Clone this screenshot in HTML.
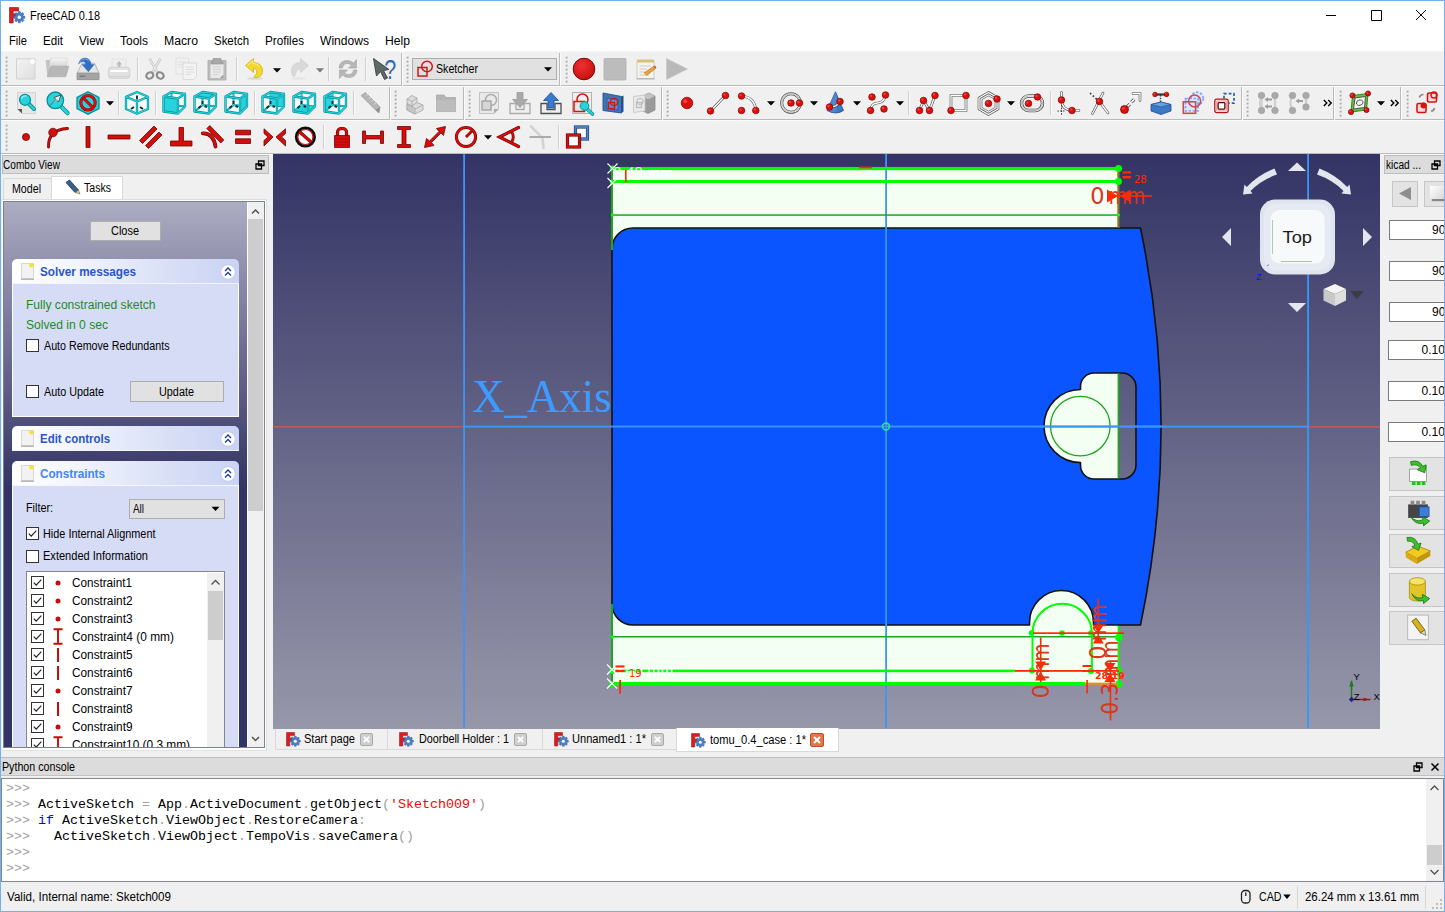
<!DOCTYPE html><html><head><meta charset="utf-8"><title>FreeCAD 0.18</title><style>
html,body{margin:0;padding:0;background:#f0f0f0;}
body{width:1445px;height:912px;overflow:hidden;font-family:"Liberation Sans",sans-serif;font-size:12px;}
#r{position:relative;width:1445px;height:912px;overflow:hidden;background:#f0f0f0;}
.t{position:absolute;white-space:pre;line-height:1;transform-origin:0 50%;display:block;}
.b{position:absolute;box-sizing:border-box;}
svg{position:absolute;overflow:visible;}
</style></head><body><div id="r">
<!-- sec_chrome -->
<div class="b" style="left:0px;top:0px;width:1445px;height:52px;background:#fff;"></div><div class="b" style="left:0px;top:51px;width:1445px;height:1px;background:#f6f6f6;"></div><svg style="left:8px;top:6px" width="18" height="18" viewBox="0 0 18 18"><path d="M1.5 1.5H10.5V5H5.2V7.8H9V11H5.2V17H1.5Z" fill="#e01b1b" stroke="#8a1010" stroke-width=".6"/><g transform="translate(11.3,11.2)"><path d="M-1.21 -3.92L-0.98 -5.62L0.98 -5.62L1.21 -3.92L1.92 -3.62L3.28 -4.66L4.66 -3.28L3.62 -1.92L3.92 -1.21L5.62 -0.98L5.62 0.98L3.92 1.21L3.62 1.92L4.66 3.28L3.28 4.66L1.92 3.62L1.21 3.92L0.98 5.62L-0.98 5.62L-1.21 3.92L-1.92 3.62L-3.28 4.66L-4.66 3.28L-3.62 1.92L-3.92 1.21L-5.62 0.98L-5.62 -0.98L-3.92 -1.21L-3.62 -1.92L-4.66 -3.28L-3.28 -4.66L-1.92 -3.62Z" fill="#4a7fc0" stroke="#2a55a0" stroke-width=".5"/><circle r="1.7" fill="#fff"/></g></svg><span class="t" style="left:30px;top:9.84px;font-size:12px;color:#000;transform:scaleX(0.9127);">FreeCAD 0.18</span><svg style="left:1300px;top:0" width="145" height="30" viewBox="0 0 145 30"><path d="M26 15.5H36M71.5 10.5H81.5V20.5H71.5ZM116 10L126 20M126 10L116 20" fill="none" stroke="#000" stroke-width="1"/></svg><span class="t" style="left:9px;top:34.84px;font-size:12px;color:#000;transform:scaleX(0.9310);">File</span><span class="t" style="left:43px;top:34.84px;font-size:12px;color:#000;transform:scaleX(0.9672);">Edit</span><span class="t" style="left:79px;top:34.84px;font-size:12px;color:#000;transform:scaleX(0.9693);">View</span><span class="t" style="left:120px;top:34.84px;font-size:12px;color:#000;transform:scaleX(0.9996);">Tools</span><span class="t" style="left:164px;top:34.84px;font-size:12px;color:#000;transform:scaleX(1.0198);">Macro</span><span class="t" style="left:214px;top:34.84px;font-size:12px;color:#000;transform:scaleX(0.9540);">Sketch</span><span class="t" style="left:265px;top:34.84px;font-size:12px;color:#000;transform:scaleX(0.9747);">Profiles</span><span class="t" style="left:320px;top:34.84px;font-size:12px;color:#000;transform:scaleX(1.0066);">Windows</span><span class="t" style="left:385px;top:34.84px;font-size:12px;color:#000;transform:scaleX(1.0130);">Help</span><div class="b" style="left:1px;top:85px;width:1443px;height:1px;background:#bababa;"></div><div class="b" style="left:1px;top:86px;width:1443px;height:1px;background:#fbfbfb;"></div><div class="b" style="left:1px;top:119px;width:1443px;height:1px;background:#bababa;"></div><div class="b" style="left:1px;top:120px;width:1443px;height:1px;background:#fbfbfb;"></div><div class="b" style="left:1px;top:153px;width:1443px;height:1px;background:#bababa;"></div><div class="b" style="left:1px;top:154px;width:1443px;height:1px;background:#f8f8f8;"></div>
<!-- sec_icons -->
<svg style="left:4.7px;top:56px" width="3" height="27" viewBox="0 0 3 27"><rect x="0" y="0" width="1.500" height="1.500" fill="#fff"/><rect x=".6" y="0.6" width="1.900" height="1.900" fill="#a6a6a6"/><rect x="0" y="4" width="1.500" height="1.500" fill="#fff"/><rect x=".6" y="4.6" width="1.900" height="1.900" fill="#a6a6a6"/><rect x="0" y="8" width="1.500" height="1.500" fill="#fff"/><rect x=".6" y="8.6" width="1.900" height="1.900" fill="#a6a6a6"/><rect x="0" y="12" width="1.500" height="1.500" fill="#fff"/><rect x=".6" y="12.6" width="1.900" height="1.900" fill="#a6a6a6"/><rect x="0" y="16" width="1.500" height="1.500" fill="#fff"/><rect x=".6" y="16.6" width="1.900" height="1.900" fill="#a6a6a6"/><rect x="0" y="20" width="1.500" height="1.500" fill="#fff"/><rect x=".6" y="20.6" width="1.900" height="1.900" fill="#a6a6a6"/><rect x="0" y="24" width="1.500" height="1.500" fill="#fff"/><rect x=".6" y="24.6" width="1.900" height="1.900" fill="#a6a6a6"/></svg><svg style="left:14.0px;top:57px" width="24" height="24" viewBox="0 0 24 24"><defs><linearGradient id="gn" x1="0" y1="0" x2="1" y2="1"><stop offset="0" stop-color="#f4f4f4"/><stop offset="1" stop-color="#dedede"/></linearGradient></defs><path d="M2.500 1.800H21V22H2.500Z" fill="url(#gn)" stroke="#d2d2d2" stroke-width="1"/><circle cx="18.500" cy="4.500" r="2.500" fill="#fff" opacity=".9"/></svg><svg style="left:45.0px;top:57px" width="24" height="24" viewBox="0 0 24 24"><defs><linearGradient id="gp" x1="0" y1="0" x2="0" y2="1"><stop offset="0" stop-color="#f6f6f6"/><stop offset="1" stop-color="#cfcfcf"/></linearGradient></defs><path d="M.5 3H6V19.700H2.500Z" fill="#c4c4c4"/><path d="M5.500 1.200H22V11H4Z" fill="url(#gp)" stroke="#c9c9c9" stroke-width=".5"/><path d="M6 9.200H24L20.700 19.800H2.200Z" fill="#b7b7b7" stroke="#ababab" stroke-width=".6"/></svg><svg style="left:76.0px;top:57px" width="24" height="24" viewBox="0 0 24 24"><path d="M6.100 6.200H18.600L22.900 16V22.600H1.200V16Z" fill="#e4e4e4" stroke="#a9a9a9" stroke-width=".8"/><path d="M1.200 16H22.900V22.600H1.200Z" fill="#a4a4a4" stroke="#8e8e8e" stroke-width=".7"/><path d="M3.500 19.300H9.500" stroke="#757575" stroke-width="1.300"/><path d="M2.500 7Q4 1 8.700 1Q14.500 1 15 7.500H18.200L12.400 14.800L6 7.500H9.500Q9.500 4.500 7.300 4.500Q4.500 4.500 2.500 7Z" fill="#2f6fc4" stroke="#2a5fa8" stroke-width=".4"/><path d="M3.500 5.500Q5.500 2 8.700 2Q12 2 13 4.500" fill="none" stroke="#7aa6e0" stroke-width=".9"/></svg><svg style="left:107.0px;top:57px" width="24" height="24" viewBox="0 0 24 24"><path d="M5 2H19.200V11H5Z" fill="#efefef" stroke="#dcdcdc" stroke-width=".7"/><path d="M12.100 4L15.200 7.600H13.400V10.200H10.800V7.600H9Z" fill="#bdbdbd"/><rect x="1.400" y="10.200" width="21.400" height="11.200" rx="2.600" fill="#e2e2e2" stroke="#cdcdcd" stroke-width=".8"/><path d="M4 14H20" stroke="#fdfdfd" stroke-width="2.200" stroke-linecap="round"/><path d="M2 19.500H22.300" stroke="#d2d2d2" stroke-width="1.200"/></svg><div class="b" style="left:137px;top:57px;width:1px;height:24px;background:#d0d0d0;"></div><div class="b" style="left:138px;top:57px;width:1px;height:24px;background:#fafafa;"></div><svg style="left:143.0px;top:57px" width="24" height="24" viewBox="0 0 24 24"><path d="M6.500 1.500L14.500 15.500M17.500 1.500L9.500 15.500" stroke="#c9c9c9" stroke-width="2.600"/><path d="M6.500 1.500L14.500 15.500M17.500 1.500L9.500 15.500" stroke="#e9e9e9" stroke-width="1.100"/><ellipse cx="6.800" cy="18.500" rx="3.600" ry="3" transform="rotate(-30 6.800 18.500)" fill="none" stroke="#8c8c8c" stroke-width="2.200"/><ellipse cx="17.200" cy="18.500" rx="3.600" ry="3" transform="rotate(30 17.200 18.500)" fill="none" stroke="#8c8c8c" stroke-width="2.200"/></svg><svg style="left:174.0px;top:57px" width="24" height="24" viewBox="0 0 24 24"><path d="M2 1H14.500V17H2Z" fill="#f1f1f1" stroke="#dcdcdc" stroke-width=".8"/><path d="M4 5H12M4 7.500H12M4 10H12" stroke="#e0e0e0" stroke-width="1"/><path d="M9 6H22.500V19.500L19.500 22.500H9Z" fill="#f3f3f3" stroke="#d4d4d4" stroke-width=".8"/><path d="M11.500 10H20M11.500 12.500H20M11.500 15H20M11.500 17.500H17" stroke="#dcdcdc" stroke-width="1.100"/></svg><svg style="left:205.0px;top:57px" width="24" height="24" viewBox="0 0 24 24"><path d="M3 3.500H21V23H3Z" fill="#bdbdbd" stroke="#a7a7a7" stroke-width=".8"/><path d="M5.500 6.500H18.500V21H5.500Z" fill="#e9e9e9"/><path d="M8 1.500H16V5H18V7H6V5H8Z" fill="#a9a9a9" stroke="#8f8f8f" stroke-width=".6"/><path d="M8 10H16M8 12.500H16M8 15H16M8 17.500H13" stroke="#d2d2d2" stroke-width="1.100"/><path d="M18.500 17.500V21H15Z" fill="#9c9c9c"/></svg><div class="b" style="left:236px;top:57px;width:1px;height:24px;background:#d0d0d0;"></div><div class="b" style="left:237px;top:57px;width:1px;height:24px;background:#fafafa;"></div><svg style="left:242.5px;top:57px" width="24" height="24" viewBox="0 0 24 24"><ellipse cx="12" cy="21.500" rx="8" ry="1.300" fill="#d9d9d9"/><path d="M2.500 8.500L10.500 1.500V5.500Q19.500 6 19.500 14Q19.500 19 14.500 20.500Q10.500 21 11 19.500Q15 17 13.500 13.500Q12.500 11.500 10.500 11.500V15.500Z" fill="#f3d72d" stroke="#d2b214" stroke-width=".8"/><path d="M4.500 8.500L10 3.500V6.500Q14 6.500 16.500 9" fill="none" stroke="#fbef9a" stroke-width="1"/></svg><svg style="left:272.5px;top:67.5px" width="8" height="5" viewBox="0 0 8 5"><path d="M0 .3H8L4 4.600Z" fill="#000"/></svg><svg style="left:286.5px;top:57px" width="24" height="24" viewBox="0 0 24 24"><ellipse cx="12" cy="21.500" rx="8" ry="1.200" fill="#e4e4e4"/><path d="M21.500 8.500L13.500 1.500V5.500Q4.500 6 4.500 14Q4.500 18 7 20Q8.500 18 9 15.500Q10 11.500 13.500 11.500V15.500Z" fill="#d9d9d9" stroke="#cdcdcd" stroke-width=".7"/></svg><svg style="left:315.5px;top:67.5px" width="8" height="5" viewBox="0 0 8 5"><path d="M0 .3H8L4 4.600Z" fill="#7a7a7a"/></svg><div class="b" style="left:328px;top:57px;width:1px;height:24px;background:#d0d0d0;"></div><div class="b" style="left:329px;top:57px;width:1px;height:24px;background:#fafafa;"></div><svg style="left:335.5px;top:57px" width="24" height="24" viewBox="0 0 24 24"><path d="M3 11Q3.500 3.500 11.500 3.500Q15 3.500 17.500 6L20.500 2.500V11H12.500L15.500 8Q13.500 6.500 11.500 6.500Q7 6.500 6.500 11Z" fill="#b7b7b7" stroke="#a2a2a2" stroke-width=".6"/><path d="M21 13Q20.500 20.500 12.500 20.500Q9 20.500 6.500 18L3.500 21.500V13H11.500L8.500 16Q10.500 17.500 12.500 17.500Q17 17.500 17.500 13Z" fill="#b7b7b7" stroke="#a2a2a2" stroke-width=".6"/></svg><div class="b" style="left:365px;top:57px;width:1px;height:24px;background:#d0d0d0;"></div><div class="b" style="left:366px;top:57px;width:1px;height:24px;background:#fafafa;"></div><svg style="left:372.0px;top:57px" width="24" height="24" viewBox="0 0 24 24"><path d="M1.500 1.500L4.500 19L8.500 14.500L12.500 22.500L15.500 21L11.500 13.500L17 12.500Z" fill="#5d6a63" stroke="#39423e" stroke-width=".9"/><text x="12.300" y="22.300" font-family="Liberation Sans,sans-serif" font-size="27" fill="#2f6ab5" textLength="12" lengthAdjust="spacingAndGlyphs">?</text></svg><div class="b" style="left:401px;top:53px;width:1px;height:33px;background:#bababa;"></div><div class="b" style="left:402px;top:53px;width:1px;height:33px;background:#fbfbfb;"></div><svg style="left:405.7px;top:56px" width="3" height="27" viewBox="0 0 3 27"><rect x="0" y="0" width="1.500" height="1.500" fill="#fff"/><rect x=".6" y="0.6" width="1.900" height="1.900" fill="#a6a6a6"/><rect x="0" y="4" width="1.500" height="1.500" fill="#fff"/><rect x=".6" y="4.6" width="1.900" height="1.900" fill="#a6a6a6"/><rect x="0" y="8" width="1.500" height="1.500" fill="#fff"/><rect x=".6" y="8.6" width="1.900" height="1.900" fill="#a6a6a6"/><rect x="0" y="12" width="1.500" height="1.500" fill="#fff"/><rect x=".6" y="12.6" width="1.900" height="1.900" fill="#a6a6a6"/><rect x="0" y="16" width="1.500" height="1.500" fill="#fff"/><rect x=".6" y="16.6" width="1.900" height="1.900" fill="#a6a6a6"/><rect x="0" y="20" width="1.500" height="1.500" fill="#fff"/><rect x=".6" y="20.6" width="1.900" height="1.900" fill="#a6a6a6"/><rect x="0" y="24" width="1.500" height="1.500" fill="#fff"/><rect x=".6" y="24.6" width="1.900" height="1.900" fill="#a6a6a6"/></svg><div class="b" style="left:412px;top:58px;width:145px;height:22px;background:#e1e1e1;border:1px solid #adadad;"></div><svg style="left:416.0px;top:60px" width="18" height="18" viewBox="0 0 18 18"><circle cx="11" cy="6.500" r="5.300" fill="none" stroke="#d4141c" stroke-width="1.500"/><rect x="2" y="7.500" width="9" height="8.500" fill="none" stroke="#d4141c" stroke-width="1.500"/></svg><span class="t" style="left:435.5px;top:63.34px;font-size:12px;color:#000;transform:scaleX(0.8869);">Sketcher</span><svg style="left:543.5px;top:67.0px" width="8" height="5" viewBox="0 0 8 5"><path d="M0 .3H8L4 4.600Z" fill="#000"/></svg><div class="b" style="left:559px;top:53px;width:1px;height:33px;background:#bababa;"></div><div class="b" style="left:560px;top:53px;width:1px;height:33px;background:#fbfbfb;"></div><svg style="left:564.7px;top:56px" width="3" height="27" viewBox="0 0 3 27"><rect x="0" y="0" width="1.500" height="1.500" fill="#fff"/><rect x=".6" y="0.6" width="1.900" height="1.900" fill="#a6a6a6"/><rect x="0" y="4" width="1.500" height="1.500" fill="#fff"/><rect x=".6" y="4.6" width="1.900" height="1.900" fill="#a6a6a6"/><rect x="0" y="8" width="1.500" height="1.500" fill="#fff"/><rect x=".6" y="8.6" width="1.900" height="1.900" fill="#a6a6a6"/><rect x="0" y="12" width="1.500" height="1.500" fill="#fff"/><rect x=".6" y="12.6" width="1.900" height="1.900" fill="#a6a6a6"/><rect x="0" y="16" width="1.500" height="1.500" fill="#fff"/><rect x=".6" y="16.6" width="1.900" height="1.900" fill="#a6a6a6"/><rect x="0" y="20" width="1.500" height="1.500" fill="#fff"/><rect x=".6" y="20.6" width="1.900" height="1.900" fill="#a6a6a6"/><rect x="0" y="24" width="1.500" height="1.500" fill="#fff"/><rect x=".6" y="24.6" width="1.900" height="1.900" fill="#a6a6a6"/></svg><svg style="left:572.0px;top:57px" width="24" height="24" viewBox="0 0 24 24"><defs><radialGradient id="gr" cx=".4" cy=".35" r=".7"><stop offset="0" stop-color="#f03030"/><stop offset="1" stop-color="#c40f0f"/></radialGradient></defs><circle cx="12" cy="12" r="10.800" fill="url(#gr)" stroke="#6e0b0b" stroke-width="1"/></svg><svg style="left:603.0px;top:57px" width="24" height="24" viewBox="0 0 24 24"><rect x="1" y="1.500" width="22" height="21.500" rx="1" fill="#bcbcbc" stroke="#b0b0b0" stroke-width=".8"/></svg><svg style="left:634.0px;top:57px" width="24" height="24" viewBox="0 0 24 24"><path d="M3 3.500H20V21.500H3Z" fill="#f4f4f0" stroke="#c2c2be" stroke-width=".8"/><path d="M3 2.500H20V5.500H3Z" fill="#d9c07a"/><path d="M2.500 21H20.500V22.500H2.500Z" fill="#b9b9b9"/><path d="M5.500 9H17M5.500 12H13M5.500 15H11M5.500 18H15" stroke="#c9c9c9" stroke-width="1"/><path d="M10 16L19.500 9.500L21.500 11.500L12.500 18.500Z" fill="#e8a33a" stroke="#a86a14" stroke-width=".6"/><path d="M10 16L12.500 18.500L8.500 19Z" fill="#f2dcb0"/><path d="M19.500 9.500L21 8.500L22.500 10.500L21.500 11.500Z" fill="#d9534f"/></svg><svg style="left:665.0px;top:57px" width="24" height="24" viewBox="0 0 24 24"><path d="M1.500 1.500V22.500L22.500 12Z" fill="#b9b9b9" stroke="#c9c9c9" stroke-width=".8"/></svg><svg style="left:4.7px;top:90px" width="3" height="27" viewBox="0 0 3 27"><rect x="0" y="0" width="1.500" height="1.500" fill="#fff"/><rect x=".6" y="0.6" width="1.900" height="1.900" fill="#a6a6a6"/><rect x="0" y="4" width="1.500" height="1.500" fill="#fff"/><rect x=".6" y="4.6" width="1.900" height="1.900" fill="#a6a6a6"/><rect x="0" y="8" width="1.500" height="1.500" fill="#fff"/><rect x=".6" y="8.6" width="1.900" height="1.900" fill="#a6a6a6"/><rect x="0" y="12" width="1.500" height="1.500" fill="#fff"/><rect x=".6" y="12.6" width="1.900" height="1.900" fill="#a6a6a6"/><rect x="0" y="16" width="1.500" height="1.500" fill="#fff"/><rect x=".6" y="16.6" width="1.900" height="1.900" fill="#a6a6a6"/><rect x="0" y="20" width="1.500" height="1.500" fill="#fff"/><rect x=".6" y="20.6" width="1.900" height="1.900" fill="#a6a6a6"/><rect x="0" y="24" width="1.500" height="1.500" fill="#fff"/><rect x=".6" y="24.6" width="1.900" height="1.900" fill="#a6a6a6"/></svg><svg style="left:13.5px;top:91px" width="24" height="24" viewBox="0 0 24 24"><path d="M3.500 1.500H21.500V22.500H8L3.500 18Z" fill="#e6e8e6" stroke="#c9c9c9" stroke-width=".7"/><path d="M3.500 18H8V22.500Z" fill="#555"/><path d="M13.500 11.500L20 18" stroke="#0b8e98" stroke-width="4" stroke-linecap="round"/><path d="M13.500 11.500L20 18" stroke="#27d4dc" stroke-width="2.200" stroke-linecap="round"/><circle cx="11" cy="8.800" r="5.500" fill="#27d4dc" stroke="#0b8e98" stroke-width="1.200"/><path d="M7.500 7.500Q9 4.500 12.500 5" fill="none" stroke="#9df1f5" stroke-width="1.300"/></svg><svg style="left:44.5px;top:91px" width="24" height="24" viewBox="0 0 24 24"><path d="M15.500 15L22.500 22" stroke="#0b8e98" stroke-width="4.400" stroke-linecap="round"/><path d="M15.500 15L22.500 22" stroke="#27d4dc" stroke-width="2.600" stroke-linecap="round"/><circle cx="10.300" cy="9.300" r="8.300" fill="#27d4dc" stroke="#0b8e98" stroke-width="1.300"/><path d="M5 14.500L11 8.500L9 6.500L16 4L13.500 11L11.800 9.300" fill="#f0f0f0" stroke="#444" stroke-width=".9" stroke-linejoin="round"/></svg><svg style="left:75.5px;top:91px" width="24" height="24" viewBox="0 0 24 24"><path d="M12 .800L23 6.500V17.500L12 23.200L1 17.500V6.500Z" fill="#27d4dc" stroke="#0b8e98" stroke-width="1.300"/><circle cx="12" cy="11.800" r="7.200" fill="none" stroke="#7a0606" stroke-width="3"/><circle cx="12" cy="11.800" r="7.200" fill="none" stroke="#dc0f0f" stroke-width="2"/><path d="M7 6.800L17 16.800" stroke="#7a0606" stroke-width="2.800"/><path d="M7 6.800L17 16.800" stroke="#dc0f0f" stroke-width="1.800"/></svg><svg style="left:105.5px;top:100.5px" width="8" height="5" viewBox="0 0 8 5"><path d="M0 .3H8L4 4.600Z" fill="#000"/></svg><div class="b" style="left:118px;top:91px;width:1px;height:24px;background:#d0d0d0;"></div><div class="b" style="left:119px;top:91px;width:1px;height:24px;background:#fafafa;"></div><svg style="left:125.0px;top:91px" width="24" height="24" viewBox="0 0 24 24"><path d="M12 1L23 5.800V18L12 22.800L1 18V5.800Z" fill="#f3fbfb"/><path d="M12 8.500V4.500" stroke="#0c2f33" stroke-width="1.900"/><path d="M9 16L6 18M15 16L18 18" stroke="#0c2f33" stroke-width="1.900"/><path d="M12 1V10.500M1 18L12 13.500L23 18" fill="none" stroke="#0b8e98" stroke-width="1.600" opacity=".0"/><path d="M12 1L23 5.800V18L12 22.800L1 18V5.800ZM1 5.800L12 10.500L23 5.800M12 10.500V22.800" fill="none" stroke="#0b8e98" stroke-width="2.300" stroke-linejoin="round"/><path d="M12 1L23 5.800V18L12 22.800L1 18V5.800ZM1 5.800L12 10.500L23 5.800M12 10.500V22.800" fill="none" stroke="#27d4dc" stroke-width="1.100" stroke-linejoin="round"/></svg><div class="b" style="left:155px;top:91px;width:1px;height:24px;background:#d0d0d0;"></div><div class="b" style="left:156px;top:91px;width:1px;height:24px;background:#fafafa;"></div><svg style="left:161.5px;top:91px" width="24" height="24" viewBox="0 0 24 24"><path d="M1.5 5.5L9.5 1L23 2.8L23 15.5L16 22.5L1.5 20.5Z" fill="#f3fbfb"/><path d="M9.5 14L9.5 1M9.5 14L23 15.5M9.5 14L1.5 20.5" fill="none" stroke="#0b8e98" stroke-width="1.900"/><path d="M9.5 14L9.5 1M9.5 14L23 15.5M9.5 14L1.5 20.5" fill="none" stroke="#27d4dc" stroke-width=".8"/><path d="M1.5 5.5L16 7.5L16 22.5L1.5 20.5Z" fill="#27d4dc"/><path d="M1.5 5.5L16 7.5L16 22.5L1.5 20.5ZM1.5 5.5L9.5 1L23 2.8L16 7.5ZM16 7.5L23 2.8L23 15.5L16 22.5Z" fill="none" stroke="#0b8e98" stroke-width="2.300" stroke-linejoin="round"/><path d="M1.5 5.5L16 7.5L16 22.5L1.5 20.5ZM1.5 5.5L9.5 1L23 2.8L16 7.5ZM16 7.5L23 2.8L23 15.5L16 22.5Z" fill="none" stroke="#27d4dc" stroke-width="1.100" stroke-linejoin="round"/></svg><svg style="left:192.5px;top:91px" width="24" height="24" viewBox="0 0 24 24"><path d="M1.5 5.5L9.5 1L23 2.8L23 15.5L16 22.5L1.5 20.5Z" fill="#f3fbfb"/><path d="M9.5 14L9.5 1M9.5 14L23 15.5M9.5 14L1.5 20.5" fill="none" stroke="#0b8e98" stroke-width="1.900"/><path d="M9.5 14L9.5 1M9.5 14L23 15.5M9.5 14L1.5 20.5" fill="none" stroke="#27d4dc" stroke-width=".8"/><path d="M9.500 13.500V10" stroke="#0c2f33" stroke-width="1.800"/><path d="M8 15L5.500 17M11.500 15L14 16" stroke="#0c2f33" stroke-width="1.900"/><path d="M9.500 13.500L8 15M9.500 13.500L11.500 15" stroke="#35dbe4" stroke-width=".9"/><path d="M1.5 5.5L9.5 1L23 2.8L16 7.5Z" fill="#27d4dc"/><path d="M1.5 5.5L16 7.5L16 22.5L1.5 20.5ZM1.5 5.5L9.5 1L23 2.8L16 7.5ZM16 7.5L23 2.8L23 15.5L16 22.5Z" fill="none" stroke="#0b8e98" stroke-width="2.300" stroke-linejoin="round"/><path d="M1.5 5.5L16 7.5L16 22.5L1.5 20.5ZM1.5 5.5L9.5 1L23 2.8L16 7.5ZM16 7.5L23 2.8L23 15.5L16 22.5Z" fill="none" stroke="#27d4dc" stroke-width="1.100" stroke-linejoin="round"/></svg><svg style="left:223.5px;top:91px" width="24" height="24" viewBox="0 0 24 24"><path d="M1.5 5.5L9.5 1L23 2.8L23 15.5L16 22.5L1.5 20.5Z" fill="#f3fbfb"/><path d="M9.5 14L9.5 1M9.5 14L23 15.5M9.5 14L1.5 20.5" fill="none" stroke="#0b8e98" stroke-width="1.900"/><path d="M9.5 14L9.5 1M9.5 14L23 15.5M9.5 14L1.5 20.5" fill="none" stroke="#27d4dc" stroke-width=".8"/><path d="M9.500 13.500V10" stroke="#0c2f33" stroke-width="1.800"/><path d="M8 15L5.500 17M11.500 15L14 16" stroke="#0c2f33" stroke-width="1.900"/><path d="M9.500 13.500L8 15M9.500 13.500L11.500 15" stroke="#35dbe4" stroke-width=".9"/><path d="M16 7.5L23 2.8L23 15.5L16 22.5Z" fill="#27d4dc"/><path d="M1.5 5.5L16 7.5L16 22.5L1.5 20.5ZM1.5 5.5L9.5 1L23 2.8L16 7.5ZM16 7.5L23 2.8L23 15.5L16 22.5Z" fill="none" stroke="#0b8e98" stroke-width="2.300" stroke-linejoin="round"/><path d="M1.5 5.5L16 7.5L16 22.5L1.5 20.5ZM1.5 5.5L9.5 1L23 2.8L16 7.5ZM16 7.5L23 2.8L23 15.5L16 22.5Z" fill="none" stroke="#27d4dc" stroke-width="1.100" stroke-linejoin="round"/></svg><div class="b" style="left:254px;top:91px;width:1px;height:24px;background:#d0d0d0;"></div><div class="b" style="left:255px;top:91px;width:1px;height:24px;background:#fafafa;"></div><svg style="left:260.5px;top:91px" width="24" height="24" viewBox="0 0 24 24"><path d="M1.5 5.5L9.5 1L23 2.8L23 15.5L16 22.5L1.5 20.5Z" fill="#f3fbfb"/><path d="M9.5 14L9.5 1M9.5 14L23 15.5M9.5 14L1.5 20.5" fill="none" stroke="#0b8e98" stroke-width="1.900"/><path d="M9.5 14L9.5 1M9.5 14L23 15.5M9.5 14L1.5 20.5" fill="none" stroke="#27d4dc" stroke-width=".8"/><path d="M9.5 1L23 2.8L23 15.5L9.5 14Z" fill="#27d4dc"/><path d="M9.500 13.500V10" stroke="#0c2f33" stroke-width="1.800"/><path d="M8 15L5.500 17M11.500 15L14 16" stroke="#0c2f33" stroke-width="1.900"/><path d="M9.500 13.500L8 15M9.500 13.500L11.500 15" stroke="#35dbe4" stroke-width=".9"/><path d="M1.5 5.5L16 7.5L16 22.5L1.5 20.5ZM1.5 5.5L9.5 1L23 2.8L16 7.5ZM16 7.5L23 2.8L23 15.5L16 22.5Z" fill="none" stroke="#0b8e98" stroke-width="2.300" stroke-linejoin="round"/><path d="M1.5 5.5L16 7.5L16 22.5L1.5 20.5ZM1.5 5.5L9.5 1L23 2.8L16 7.5ZM16 7.5L23 2.8L23 15.5L16 22.5Z" fill="none" stroke="#27d4dc" stroke-width="1.100" stroke-linejoin="round"/></svg><svg style="left:291.5px;top:91px" width="24" height="24" viewBox="0 0 24 24"><path d="M1.5 5.5L9.5 1L23 2.8L23 15.5L16 22.5L1.5 20.5Z" fill="#f3fbfb"/><path d="M9.5 14L9.5 1M9.5 14L23 15.5M9.5 14L1.5 20.5" fill="none" stroke="#0b8e98" stroke-width="1.900"/><path d="M9.5 14L9.5 1M9.5 14L23 15.5M9.5 14L1.5 20.5" fill="none" stroke="#27d4dc" stroke-width=".8"/><path d="M1.5 20.5L9.5 14L23 15.5L16 22.5Z" fill="#27d4dc"/><path d="M9.500 13.500V10" stroke="#0c2f33" stroke-width="1.800"/><path d="M8 15L5.500 17M11.500 15L14 16" stroke="#0c2f33" stroke-width="1.900"/><path d="M9.500 13.500L8 15M9.500 13.500L11.500 15" stroke="#35dbe4" stroke-width=".9"/><path d="M1.5 5.5L16 7.5L16 22.5L1.5 20.5ZM1.5 5.5L9.5 1L23 2.8L16 7.5ZM16 7.5L23 2.8L23 15.5L16 22.5Z" fill="none" stroke="#0b8e98" stroke-width="2.300" stroke-linejoin="round"/><path d="M1.5 5.5L16 7.5L16 22.5L1.5 20.5ZM1.5 5.5L9.5 1L23 2.8L16 7.5ZM16 7.5L23 2.8L23 15.5L16 22.5Z" fill="none" stroke="#27d4dc" stroke-width="1.100" stroke-linejoin="round"/></svg><svg style="left:322.5px;top:91px" width="24" height="24" viewBox="0 0 24 24"><path d="M1.5 5.5L9.5 1L23 2.8L23 15.5L16 22.5L1.5 20.5Z" fill="#f3fbfb"/><path d="M9.5 14L9.5 1M9.5 14L23 15.5M9.5 14L1.5 20.5" fill="none" stroke="#0b8e98" stroke-width="1.900"/><path d="M9.5 14L9.5 1M9.5 14L23 15.5M9.5 14L1.5 20.5" fill="none" stroke="#27d4dc" stroke-width=".8"/><path d="M1.5 5.5L9.5 1L9.5 14L1.5 20.5Z" fill="#27d4dc"/><path d="M9.500 13.500V10" stroke="#0c2f33" stroke-width="1.800"/><path d="M8 15L5.500 17M11.500 15L14 16" stroke="#0c2f33" stroke-width="1.900"/><path d="M9.500 13.500L8 15M9.500 13.500L11.500 15" stroke="#35dbe4" stroke-width=".9"/><path d="M1.5 5.5L16 7.5L16 22.5L1.5 20.5ZM1.5 5.5L9.5 1L23 2.8L16 7.5ZM16 7.5L23 2.8L23 15.5L16 22.5Z" fill="none" stroke="#0b8e98" stroke-width="2.300" stroke-linejoin="round"/><path d="M1.5 5.5L16 7.5L16 22.5L1.5 20.5ZM1.5 5.5L9.5 1L23 2.8L16 7.5ZM16 7.5L23 2.8L23 15.5L16 22.5Z" fill="none" stroke="#27d4dc" stroke-width="1.100" stroke-linejoin="round"/></svg><div class="b" style="left:353px;top:91px;width:1px;height:24px;background:#d0d0d0;"></div><div class="b" style="left:354px;top:91px;width:1px;height:24px;background:#fafafa;"></div><svg style="left:359.0px;top:91px" width="24" height="24" viewBox="0 0 24 24"><path d="M2 4.500L6.500 1.500L21 16L20 22L16.500 19Z" fill="#b5b5b5" stroke="#a0a0a0" stroke-width=".7"/><path d="M16.500 19L21 16L20 22Z" fill="#8e8e8e"/><path d="M7.500 4.500L9.500 3M10 7.500L12.500 5.500M12.500 10.500L14.500 9M15 13.500L17.500 11.500" stroke="#e0e0e0" stroke-width="1"/></svg><div class="b" style="left:389px;top:87px;width:1px;height:33px;background:#bababa;"></div><div class="b" style="left:390px;top:87px;width:1px;height:33px;background:#fbfbfb;"></div><svg style="left:393.7px;top:90px" width="3" height="27" viewBox="0 0 3 27"><rect x="0" y="0" width="1.500" height="1.500" fill="#fff"/><rect x=".6" y="0.6" width="1.900" height="1.900" fill="#a6a6a6"/><rect x="0" y="4" width="1.500" height="1.500" fill="#fff"/><rect x=".6" y="4.6" width="1.900" height="1.900" fill="#a6a6a6"/><rect x="0" y="8" width="1.500" height="1.500" fill="#fff"/><rect x=".6" y="8.6" width="1.900" height="1.900" fill="#a6a6a6"/><rect x="0" y="12" width="1.500" height="1.500" fill="#fff"/><rect x=".6" y="12.6" width="1.900" height="1.900" fill="#a6a6a6"/><rect x="0" y="16" width="1.500" height="1.500" fill="#fff"/><rect x=".6" y="16.6" width="1.900" height="1.900" fill="#a6a6a6"/><rect x="0" y="20" width="1.500" height="1.500" fill="#fff"/><rect x=".6" y="20.6" width="1.900" height="1.900" fill="#a6a6a6"/><rect x="0" y="24" width="1.500" height="1.500" fill="#fff"/><rect x=".6" y="24.6" width="1.900" height="1.900" fill="#a6a6a6"/></svg><svg style="left:403.0px;top:91px" width="24" height="24" viewBox="0 0 24 24"><path d="M4 8L9 4.500L14 7V11.500L20 14V19L12 23L4 19Z" fill="#dcdcdc" stroke="#a6a6a6" stroke-width=".8"/><path d="M4 8L9 10.500L14 7M9 10.500V15L4 12.500M9 15L14 11.500M9 15L12 23M12 18L20 14" fill="none" stroke="#a6a6a6" stroke-width=".8"/><path d="M4 13L12 17.500V23L4 19Z" fill="#c6c6c6" stroke="#a6a6a6" stroke-width=".7"/></svg><svg style="left:434.0px;top:91px" width="24" height="24" viewBox="0 0 24 24"><path d="M2.500 4H10L12 6.500H21.500V20.500H2.500Z" fill="#b4b4b4" stroke="#a4a4a4" stroke-width=".7"/><path d="M2.500 9H21.500V20.500H2.500Z" fill="#bdbdbd"/></svg><div class="b" style="left:463px;top:87px;width:1px;height:33px;background:#bababa;"></div><div class="b" style="left:464px;top:87px;width:1px;height:33px;background:#fbfbfb;"></div><svg style="left:467.7px;top:90px" width="3" height="27" viewBox="0 0 3 27"><rect x="0" y="0" width="1.500" height="1.500" fill="#fff"/><rect x=".6" y="0.6" width="1.900" height="1.900" fill="#a6a6a6"/><rect x="0" y="4" width="1.500" height="1.500" fill="#fff"/><rect x=".6" y="4.6" width="1.900" height="1.900" fill="#a6a6a6"/><rect x="0" y="8" width="1.500" height="1.500" fill="#fff"/><rect x=".6" y="8.6" width="1.900" height="1.900" fill="#a6a6a6"/><rect x="0" y="12" width="1.500" height="1.500" fill="#fff"/><rect x=".6" y="12.6" width="1.900" height="1.900" fill="#a6a6a6"/><rect x="0" y="16" width="1.500" height="1.500" fill="#fff"/><rect x=".6" y="16.6" width="1.900" height="1.900" fill="#a6a6a6"/><rect x="0" y="20" width="1.500" height="1.500" fill="#fff"/><rect x=".6" y="20.6" width="1.900" height="1.900" fill="#a6a6a6"/><rect x="0" y="24" width="1.500" height="1.500" fill="#fff"/><rect x=".6" y="24.6" width="1.900" height="1.900" fill="#a6a6a6"/></svg><svg style="left:477.0px;top:91px" width="24" height="24" viewBox="0 0 24 24"><path d="M2.500 1.500H21.500V18L17 22.500H2.500Z" fill="#e9e9e9" stroke="#bdbdbd" stroke-width=".9"/><path d="M17 22.500V18H21.500Z" fill="#a9a9a9"/><circle cx="14" cy="9" r="5.500" fill="none" stroke="#a9a9a9" stroke-width="1.400"/><rect x="5" y="10" width="9" height="9" fill="#d6d6d6" stroke="#a4a4a4" stroke-width="1.400"/></svg><svg style="left:508.0px;top:91px" width="24" height="24" viewBox="0 0 24 24"><path d="M2 12.500H8V18.500H16V12.500H22V22.500H2Z" fill="#f0f0f0" stroke="#a9a9a9" stroke-width="1.300"/><path d="M9 1.500H15V8.500H19.500L12 16.500L4.500 8.500H9Z" fill="#aaaaaa" stroke="#979797" stroke-width=".7"/></svg><svg style="left:539.0px;top:91px" width="24" height="24" viewBox="0 0 24 24"><path d="M2 12.500H8V18.500H16V12.500H22V22.500H2Z" fill="#eef0f0" stroke="#4b4f4f" stroke-width="1.300"/><path d="M9 17V9.500H4.500L12 1.500L19.500 9.500H15V17Z" fill="#3a7bd0" stroke="#1c4e94" stroke-width=".8"/></svg><svg style="left:570.0px;top:91px" width="24" height="24" viewBox="0 0 24 24"><path d="M2.500 1.500H21.500V22.500H2.500Z" fill="#f0f0ee" stroke="#a8a8a8" stroke-width=".9"/><circle cx="12.500" cy="8.500" r="5.500" fill="none" stroke="#dc0f0f" stroke-width="1.500"/><rect x="4" y="10.500" width="10.500" height="10" fill="#e6e6e6" stroke="#dc0f0f" stroke-width="1.500"/><path d="M16 17L22.500 23" stroke="#0b8e98" stroke-width="3.600" stroke-linecap="round"/><path d="M16 17L22.500 23" stroke="#27d4dc" stroke-width="2" stroke-linecap="round"/><circle cx="14.500" cy="15" r="4.300" fill="#27d4dc" stroke="#0b8e98" stroke-width="1"/></svg><svg style="left:601.0px;top:91px" width="24" height="24" viewBox="0 0 24 24"><path d="M2 2L20.500 5.500V22L2 19.500Z" fill="#3f74b8" stroke="#1f4f8e" stroke-width=".9"/><path d="M20.500 5.500L22.500 4.500V20.500L20.500 22Z" fill="#274f86"/><path d="M6 7L17 9V19L6 17.500Z" fill="#5b8fd0" stroke="#26508c" stroke-width=".7"/><circle cx="13" cy="11" r="3.600" fill="none" stroke="#dc0f0f" stroke-width="1.300"/><rect x="7.500" y="11.500" width="6" height="6" fill="none" stroke="#dc0f0f" stroke-width="1.300"/></svg><svg style="left:632.0px;top:91px" width="24" height="24" viewBox="0 0 24 24"><path d="M10 5.500L17 2L23 5V19L16 22.500L10 19.500Z" fill="#9b9b9b" stroke="#858585" stroke-width=".7"/><path d="M10 5.500L17 2L23 5L16 8.500Z" fill="#c4c4c4"/><path d="M1.500 5.500L13 4V20L1.500 21.500Z" fill="#e9e9e9" stroke="#c3c3c3" stroke-width=".8"/><circle cx="8" cy="10.500" r="3" fill="none" stroke="#bdbdbd" stroke-width="1.200"/><rect x="4.500" y="11.500" width="5" height="5" fill="none" stroke="#bdbdbd" stroke-width="1.200"/></svg><div class="b" style="left:661px;top:87px;width:1px;height:33px;background:#bababa;"></div><div class="b" style="left:662px;top:87px;width:1px;height:33px;background:#fbfbfb;"></div><svg style="left:665.7px;top:90px" width="3" height="27" viewBox="0 0 3 27"><rect x="0" y="0" width="1.500" height="1.500" fill="#fff"/><rect x=".6" y="0.6" width="1.900" height="1.900" fill="#a6a6a6"/><rect x="0" y="4" width="1.500" height="1.500" fill="#fff"/><rect x=".6" y="4.6" width="1.900" height="1.900" fill="#a6a6a6"/><rect x="0" y="8" width="1.500" height="1.500" fill="#fff"/><rect x=".6" y="8.6" width="1.900" height="1.900" fill="#a6a6a6"/><rect x="0" y="12" width="1.500" height="1.500" fill="#fff"/><rect x=".6" y="12.6" width="1.900" height="1.900" fill="#a6a6a6"/><rect x="0" y="16" width="1.500" height="1.500" fill="#fff"/><rect x=".6" y="16.6" width="1.900" height="1.900" fill="#a6a6a6"/><rect x="0" y="20" width="1.500" height="1.500" fill="#fff"/><rect x=".6" y="20.6" width="1.900" height="1.900" fill="#a6a6a6"/><rect x="0" y="24" width="1.500" height="1.500" fill="#fff"/><rect x=".6" y="24.6" width="1.900" height="1.900" fill="#a6a6a6"/></svg><svg style="left:675.0px;top:91px" width="24" height="24" viewBox="0 0 24 24"><circle cx="12" cy="12" r="5.8" fill="#dc0f0f" stroke="#7a0606" stroke-width=".7"/><circle cx="10.26" cy="10.26" r="2.03" fill="#ff5a4a" opacity=".7"/></svg><svg style="left:706.0px;top:91px" width="24" height="24" viewBox="0 0 24 24"><path d="M4.500 20L19.500 4.500" fill="none" stroke="#555" stroke-width="2.600" stroke-linecap="round"/><path d="M4.500 20L19.500 4.500" fill="none" stroke="#fff" stroke-width="1.300" stroke-linecap="round"/><circle cx="4.5" cy="20" r="3.3" fill="#dc0f0f" stroke="#7a0606" stroke-width=".7"/><circle cx="3.5100000000000002" cy="19.01" r="1.1549999999999998" fill="#ff5a4a" opacity=".7"/><circle cx="19.5" cy="4.5" r="3.3" fill="#dc0f0f" stroke="#7a0606" stroke-width=".7"/><circle cx="18.51" cy="3.5100000000000002" r="1.1549999999999998" fill="#ff5a4a" opacity=".7"/></svg><svg style="left:737.0px;top:91px" width="24" height="24" viewBox="0 0 24 24"><path d="M4.500 5Q17.500 6 19 19.500" fill="none" stroke="#555" stroke-width="2.600" stroke-linecap="round"/><path d="M4.500 5Q17.500 6 19 19.500" fill="none" stroke="#fff" stroke-width="1.300" stroke-linecap="round"/><circle cx="4.5" cy="5" r="3.3" fill="#dc0f0f" stroke="#7a0606" stroke-width=".7"/><circle cx="3.5100000000000002" cy="4.01" r="1.1549999999999998" fill="#ff5a4a" opacity=".7"/><circle cx="4.5" cy="19.5" r="3.3" fill="#dc0f0f" stroke="#7a0606" stroke-width=".7"/><circle cx="3.5100000000000002" cy="18.51" r="1.1549999999999998" fill="#ff5a4a" opacity=".7"/><circle cx="18.8" cy="19.5" r="3.3" fill="#dc0f0f" stroke="#7a0606" stroke-width=".7"/><circle cx="17.810000000000002" cy="18.51" r="1.1549999999999998" fill="#ff5a4a" opacity=".7"/></svg><svg style="left:766.5px;top:100.5px" width="8" height="5" viewBox="0 0 8 5"><path d="M0 .3H8L4 4.600Z" fill="#000"/></svg><svg style="left:779.0px;top:91px" width="24" height="24" viewBox="0 0 24 24"><circle cx="12" cy="12" r="9.300" fill="none" stroke="#555" stroke-width="3"/><circle cx="12" cy="12" r="9.300" fill="none" stroke="#fff" stroke-width="1.600"/><circle cx="12" cy="12" r="9.300" fill="none" stroke="#777" stroke-width=".5"/><circle cx="12" cy="12" r="3.3" fill="#dc0f0f" stroke="#7a0606" stroke-width=".7"/><circle cx="11.01" cy="11.01" r="1.1549999999999998" fill="#ff5a4a" opacity=".7"/><circle cx="20.5" cy="12" r="3.3" fill="#dc0f0f" stroke="#7a0606" stroke-width=".7"/><circle cx="19.51" cy="11.01" r="1.1549999999999998" fill="#ff5a4a" opacity=".7"/></svg><svg style="left:809.5px;top:100.5px" width="8" height="5" viewBox="0 0 8 5"><path d="M0 .3H8L4 4.600Z" fill="#000"/></svg><svg style="left:822.5px;top:91px" width="24" height="24" viewBox="0 0 24 24"><path d="M12.500 .800L20.500 19.500Q13 24.500 4 19.500Z" fill="#3c78c4" stroke="#1c4c92" stroke-width=".8"/><path d="M12.500 .800L15 10L13 21.500Q8 21.500 4 19.500Z" fill="#5b93d6" opacity=".6"/><path d="M7.500 15.500Q13.500 16.500 17 10.500" fill="none" stroke="#555" stroke-width="2.600" stroke-linecap="round"/><path d="M7.500 15.500Q13.500 16.500 17 10.500" fill="none" stroke="#fff" stroke-width="1.300" stroke-linecap="round"/><circle cx="6.5" cy="16" r="3.3" fill="#dc0f0f" stroke="#7a0606" stroke-width=".7"/><circle cx="5.51" cy="15.01" r="1.1549999999999998" fill="#ff5a4a" opacity=".7"/><circle cx="17" cy="10.5" r="3.3" fill="#dc0f0f" stroke="#7a0606" stroke-width=".7"/><circle cx="16.01" cy="9.51" r="1.1549999999999998" fill="#ff5a4a" opacity=".7"/></svg><svg style="left:852.5px;top:100.5px" width="8" height="5" viewBox="0 0 8 5"><path d="M0 .3H8L4 4.600Z" fill="#000"/></svg><svg style="left:865.5px;top:91px" width="24" height="24" viewBox="0 0 24 24"><path d="M4.500 19.500Q5 12.500 11.500 12Q18 11.500 19.500 4.500" fill="none" stroke="#555" stroke-width="2.600" stroke-linecap="round"/><path d="M4.500 19.500Q5 12.500 11.500 12Q18 11.500 19.500 4.500" fill="none" stroke="#fff" stroke-width="1.300" stroke-linecap="round"/><circle cx="6" cy="6" r="3.3" fill="#dc0f0f" stroke="#7a0606" stroke-width=".7"/><circle cx="5.01" cy="5.01" r="1.1549999999999998" fill="#ff5a4a" opacity=".7"/><circle cx="19.5" cy="4" r="3.3" fill="#dc0f0f" stroke="#7a0606" stroke-width=".7"/><circle cx="18.51" cy="3.0100000000000002" r="1.1549999999999998" fill="#ff5a4a" opacity=".7"/><circle cx="4.5" cy="19.5" r="3.3" fill="#dc0f0f" stroke="#7a0606" stroke-width=".7"/><circle cx="3.5100000000000002" cy="18.51" r="1.1549999999999998" fill="#ff5a4a" opacity=".7"/><circle cx="18" cy="18" r="3.3" fill="#dc0f0f" stroke="#7a0606" stroke-width=".7"/><circle cx="17.01" cy="17.01" r="1.1549999999999998" fill="#ff5a4a" opacity=".7"/></svg><svg style="left:895.5px;top:100.5px" width="8" height="5" viewBox="0 0 8 5"><path d="M0 .3H8L4 4.600Z" fill="#000"/></svg><div class="b" style="left:908px;top:91px;width:1px;height:24px;background:#d0d0d0;"></div><div class="b" style="left:909px;top:91px;width:1px;height:24px;background:#fafafa;"></div><svg style="left:914.5px;top:91px" width="24" height="24" viewBox="0 0 24 24"><path d="M4.500 19.500L8.500 9.500L14.500 19.500L20 4.500" fill="none" stroke="#555" stroke-width="2.600" stroke-linecap="round"/><path d="M4.500 19.500L8.500 9.500L14.500 19.500L20 4.500" fill="none" stroke="#fff" stroke-width="1.300" stroke-linecap="round"/><circle cx="4.5" cy="19.5" r="3.3" fill="#dc0f0f" stroke="#7a0606" stroke-width=".7"/><circle cx="3.5100000000000002" cy="18.51" r="1.1549999999999998" fill="#ff5a4a" opacity=".7"/><circle cx="8.5" cy="9.5" r="3.3" fill="#dc0f0f" stroke="#7a0606" stroke-width=".7"/><circle cx="7.51" cy="8.51" r="1.1549999999999998" fill="#ff5a4a" opacity=".7"/><circle cx="14.5" cy="19.5" r="3.3" fill="#dc0f0f" stroke="#7a0606" stroke-width=".7"/><circle cx="13.51" cy="18.51" r="1.1549999999999998" fill="#ff5a4a" opacity=".7"/><circle cx="20" cy="4.5" r="3.3" fill="#dc0f0f" stroke="#7a0606" stroke-width=".7"/><circle cx="19.01" cy="3.5100000000000002" r="1.1549999999999998" fill="#ff5a4a" opacity=".7"/></svg><svg style="left:945.5px;top:91px" width="24" height="24" viewBox="0 0 24 24"><path d="M5 19.500V4.500H20V19.500Z" fill="none" stroke="#555" stroke-width="2.600" stroke-linecap="round"/><path d="M5 19.500V4.500H20V19.500Z" fill="none" stroke="#fff" stroke-width="1.300" stroke-linecap="round"/><circle cx="5" cy="19.5" r="3.3" fill="#dc0f0f" stroke="#7a0606" stroke-width=".7"/><circle cx="4.01" cy="18.51" r="1.1549999999999998" fill="#ff5a4a" opacity=".7"/><circle cx="20" cy="4.5" r="3.3" fill="#dc0f0f" stroke="#7a0606" stroke-width=".7"/><circle cx="19.01" cy="3.5100000000000002" r="1.1549999999999998" fill="#ff5a4a" opacity=".7"/></svg><svg style="left:976.5px;top:91px" width="24" height="24" viewBox="0 0 24 24"><path d="M11.500 1.500L21 7V18L11.500 23.500L2 18V7Z" fill="none" stroke="#555" stroke-width="2.600" stroke-linecap="round"/><path d="M11.500 1.500L21 7V18L11.500 23.500L2 18V7Z" fill="none" stroke="#fff" stroke-width="1.300" stroke-linecap="round"/><path d="M11.500 5L18 8.500V16.500L11.500 20L5 16.500V8.500Z" fill="none" stroke="#666" stroke-width=".7"/><circle cx="11.5" cy="12.5" r="3.3" fill="#dc0f0f" stroke="#7a0606" stroke-width=".7"/><circle cx="10.51" cy="11.51" r="1.1549999999999998" fill="#ff5a4a" opacity=".7"/><circle cx="20" cy="8" r="3.3" fill="#dc0f0f" stroke="#7a0606" stroke-width=".7"/><circle cx="19.01" cy="7.01" r="1.1549999999999998" fill="#ff5a4a" opacity=".7"/></svg><svg style="left:1006.5px;top:100.5px" width="8" height="5" viewBox="0 0 8 5"><path d="M0 .3H8L4 4.600Z" fill="#000"/></svg><svg style="left:1019.5px;top:91px" width="24" height="24" viewBox="0 0 24 24"><rect x="1.500" y="5" width="21" height="14.500" rx="7.200" fill="none" stroke="#555" stroke-width="3.400"/><rect x="1.500" y="5" width="21" height="14.500" rx="7.200" fill="none" stroke="#fff" stroke-width="1.800"/><rect x="1.500" y="5" width="21" height="14.500" rx="7.200" fill="none" stroke="#666" stroke-width=".5"/><circle cx="8.5" cy="12.5" r="3.3" fill="#dc0f0f" stroke="#7a0606" stroke-width=".7"/><circle cx="7.51" cy="11.51" r="1.1549999999999998" fill="#ff5a4a" opacity=".7"/><circle cx="17.5" cy="6" r="3.3" fill="#dc0f0f" stroke="#7a0606" stroke-width=".7"/><circle cx="16.51" cy="5.01" r="1.1549999999999998" fill="#ff5a4a" opacity=".7"/></svg><div class="b" style="left:1050px;top:91px;width:1px;height:24px;background:#d0d0d0;"></div><div class="b" style="left:1051px;top:91px;width:1px;height:24px;background:#fafafa;"></div><svg style="left:1055.5px;top:91px" width="24" height="24" viewBox="0 0 24 24"><path d="M5.500 1.500V9M16 19.500H23" fill="none" stroke="#555" stroke-width="2.600" stroke-linecap="round"/><path d="M5.500 1.500V9M16 19.500H23" fill="none" stroke="#fff" stroke-width="1.300" stroke-linecap="round"/><path d="M5.500 9Q6 19 16 19.500" fill="none" stroke="#555" stroke-width="2.600" stroke-linecap="round"/><path d="M5.500 9Q6 19 16 19.500" fill="none" stroke="#fff" stroke-width="1.300" stroke-linecap="round"/><path d="M5.500 14V24M1.500 20H9" stroke="#222" stroke-width=".9" stroke-dasharray="1.500 1.200"/><circle cx="5.5" cy="9" r="3.3" fill="#dc0f0f" stroke="#7a0606" stroke-width=".7"/><circle cx="4.51" cy="8.01" r="1.1549999999999998" fill="#ff5a4a" opacity=".7"/><circle cx="16" cy="19.5" r="3.3" fill="#dc0f0f" stroke="#7a0606" stroke-width=".7"/><circle cx="15.01" cy="18.51" r="1.1549999999999998" fill="#ff5a4a" opacity=".7"/></svg><svg style="left:1086.5px;top:91px" width="24" height="24" viewBox="0 0 24 24"><path d="M16 2L5.500 22.500" fill="none" stroke="#555" stroke-width="2.600" stroke-linecap="round"/><path d="M16 2L5.500 22.500" fill="none" stroke="#fff" stroke-width="1.300" stroke-linecap="round"/><path d="M12.500 10.500L21 22" fill="none" stroke="#555" stroke-width="2.600" stroke-linecap="round"/><path d="M12.500 10.500L21 22" fill="none" stroke="#fff" stroke-width="1.300" stroke-linecap="round"/><path d="M3 2L11 9.500" stroke="#333" stroke-width="1.600" stroke-dasharray="1.600 2.200"/><circle cx="12.5" cy="10.5" r="3.3" fill="#dc0f0f" stroke="#7a0606" stroke-width=".7"/><circle cx="11.51" cy="9.51" r="1.1549999999999998" fill="#ff5a4a" opacity=".7"/></svg><svg style="left:1117.5px;top:91px" width="24" height="24" viewBox="0 0 24 24"><path d="M9 16L17 7.500" stroke="#444" stroke-width="3.200" stroke-dasharray="4 2.500"/><path d="M9 16L17 7.500" stroke="#fff" stroke-width="1.600" stroke-dasharray="4 2.500"/><path d="M15 2.500H22V9.500" fill="none" stroke="#555" stroke-width="2.600" stroke-linecap="round"/><path d="M15 2.500H22V9.500" fill="none" stroke="#fff" stroke-width="1.300" stroke-linecap="round"/><circle cx="6.5" cy="18.5" r="4" fill="#dc0f0f" stroke="#7a0606" stroke-width=".7"/><circle cx="5.3" cy="17.3" r="1.4" fill="#ff5a4a" opacity=".7"/></svg><svg style="left:1148.5px;top:91px" width="24" height="24" viewBox="0 0 24 24"><path d="M2 13.500L12 11L22 13.500V20L12 23.500L2 20Z" fill="#3c78c4" stroke="#1c4c92" stroke-width=".8"/><path d="M2 13.500L12 16L22 13.500L12 11Z" fill="#6ba0de" stroke="#1c4c92" stroke-width=".6"/><path d="M11.500 4V11.500" stroke="#444" stroke-width="1.500" stroke-dasharray="1.500 1.200"/><path d="M6 3.500H17.500" stroke="#333" stroke-width="2.200"/><circle cx="6" cy="3.5" r="2.3" fill="#dc0f0f" stroke="#7a0606" stroke-width=".7"/><circle cx="5.3100000000000005" cy="2.81" r="0.8049999999999999" fill="#ff5a4a" opacity=".7"/><circle cx="17.5" cy="3.5" r="2.3" fill="#dc0f0f" stroke="#7a0606" stroke-width=".7"/><circle cx="16.81" cy="2.81" r="0.8049999999999999" fill="#ff5a4a" opacity=".7"/></svg><svg style="left:1179.5px;top:91px" width="24" height="24" viewBox="0 0 24 24"><circle cx="17" cy="7.500" r="6.300" fill="#dbe6ff" stroke="#7ea2ff" stroke-width="1.700" stroke-dasharray="2.400 1.600"/><rect x="5.500" y="7.500" width="12.500" height="12.500" fill="#dbe6ff" stroke="#7ea2ff" stroke-width="1.700" stroke-dasharray="2.400 1.600"/><circle cx="14.600" cy="9.900" r="6" fill="none" stroke="#c84a4a" stroke-width="1.500"/><rect x="3.300" y="10.800" width="12.300" height="11.500" fill="none" stroke="#c84a4a" stroke-width="1.600"/></svg><svg style="left:1210.5px;top:91px" width="24" height="24" viewBox="0 0 24 24"><path d="M13 7.500V2.600H23V12.200H18" fill="none" stroke="#2d5fa8" stroke-width="1.700" stroke-dasharray="2.800 2"/><rect x="3.800" y="8.100" width="13.400" height="13.500" rx="1.800" fill="#fff" stroke="#b41414" stroke-width="1.300"/><rect x="5.600" y="9.900" width="9.800" height="9.900" rx="1" fill="none" stroke="#f2a0a0" stroke-width="1.200"/><rect x="7.100" y="11.600" width="6.800" height="6.500" rx=".8" fill="#fff" stroke="#4a0a0a" stroke-width="1.300"/></svg><div class="b" style="left:1241px;top:87px;width:1px;height:33px;background:#bababa;"></div><div class="b" style="left:1242px;top:87px;width:1px;height:33px;background:#fbfbfb;"></div><svg style="left:1245.7px;top:90px" width="3" height="27" viewBox="0 0 3 27"><rect x="0" y="0" width="1.500" height="1.500" fill="#fff"/><rect x=".6" y="0.6" width="1.900" height="1.900" fill="#a6a6a6"/><rect x="0" y="4" width="1.500" height="1.500" fill="#fff"/><rect x=".6" y="4.6" width="1.900" height="1.900" fill="#a6a6a6"/><rect x="0" y="8" width="1.500" height="1.500" fill="#fff"/><rect x=".6" y="8.6" width="1.900" height="1.900" fill="#a6a6a6"/><rect x="0" y="12" width="1.500" height="1.500" fill="#fff"/><rect x=".6" y="12.6" width="1.900" height="1.900" fill="#a6a6a6"/><rect x="0" y="16" width="1.500" height="1.500" fill="#fff"/><rect x=".6" y="16.6" width="1.900" height="1.900" fill="#a6a6a6"/><rect x="0" y="20" width="1.500" height="1.500" fill="#fff"/><rect x=".6" y="20.6" width="1.900" height="1.900" fill="#a6a6a6"/><rect x="0" y="24" width="1.500" height="1.500" fill="#fff"/><rect x=".6" y="24.6" width="1.900" height="1.900" fill="#a6a6a6"/></svg><svg style="left:1255.5px;top:91px" width="24" height="24" viewBox="0 0 24 24"><path d="M5.500 5V19M19 5V19" stroke="#d0d0d0" stroke-width="2.500"/><path d="M5.500 5Q1.500 12 5.500 19" fill="none" stroke="#c6c6c6" stroke-width="1"/><g fill="#a9a9a9" stroke="#9b9b9b" stroke-width=".5"><circle cx="5.500" cy="4.500" r="3.300"/><circle cx="19" cy="4.500" r="3.300"/><circle cx="5.500" cy="19.500" r="3.300"/><circle cx="19" cy="19.500" r="3.300"/></g><path d="M8.500 8.500L12 6V7.500H16V9.500H12V11ZM8.500 15.500L12 13V14.500H16V16.500H12V18Z" fill="#9c9c9c"/></svg><svg style="left:1286.5px;top:91px" width="24" height="24" viewBox="0 0 24 24"><path d="M19 5V19" stroke="#d0d0d0" stroke-width="2.500"/><path d="M5.500 5Q1.500 12 5.500 19" fill="none" stroke="#cfcfcf" stroke-width="2.200"/><g fill="#a9a9a9" stroke="#9b9b9b" stroke-width=".5"><circle cx="5.500" cy="4.500" r="3.300"/><circle cx="19" cy="4.500" r="3.300"/><circle cx="5.500" cy="19.500" r="3.300"/><circle cx="19" cy="16" r="3.300"/></g><path d="M8.500 10L12 7.500V9H16V11H12V12.500Z" fill="#9c9c9c"/></svg><svg style="left:1322.500px;top:99px" width="9" height="8" viewBox="0 0 9 8"><path d="M.8 1L3.800 4L.8 7M5.200 1L8.200 4L5.200 7" fill="none" stroke="#000" stroke-width="1.400"/></svg><div class="b" style="left:1333px;top:87px;width:1px;height:33px;background:#bababa;"></div><div class="b" style="left:1334px;top:87px;width:1px;height:33px;background:#fbfbfb;"></div><svg style="left:1338.7px;top:90px" width="3" height="27" viewBox="0 0 3 27"><rect x="0" y="0" width="1.500" height="1.500" fill="#fff"/><rect x=".6" y="0.6" width="1.900" height="1.900" fill="#a6a6a6"/><rect x="0" y="4" width="1.500" height="1.500" fill="#fff"/><rect x=".6" y="4.6" width="1.900" height="1.900" fill="#a6a6a6"/><rect x="0" y="8" width="1.500" height="1.500" fill="#fff"/><rect x=".6" y="8.6" width="1.900" height="1.900" fill="#a6a6a6"/><rect x="0" y="12" width="1.500" height="1.500" fill="#fff"/><rect x=".6" y="12.6" width="1.900" height="1.900" fill="#a6a6a6"/><rect x="0" y="16" width="1.500" height="1.500" fill="#fff"/><rect x=".6" y="16.6" width="1.900" height="1.900" fill="#a6a6a6"/><rect x="0" y="20" width="1.500" height="1.500" fill="#fff"/><rect x=".6" y="20.6" width="1.900" height="1.900" fill="#a6a6a6"/><rect x="0" y="24" width="1.500" height="1.500" fill="#fff"/><rect x=".6" y="24.6" width="1.900" height="1.900" fill="#a6a6a6"/></svg><svg style="left:1347.5px;top:91px" width="24" height="24" viewBox="0 0 24 24"><path d="M4.500 4.500L20 2.500L18.500 19L3 21Z" fill="#6cc04a" stroke="#2f8a1c" stroke-width="1"/><path d="M7 7L17.500 5.500L16.500 16.500L5.500 18Z" fill="#f4f4f4" stroke="#333" stroke-width=".8"/><path d="M8.500 13Q8 9.500 11 9Q14 8.500 15 10.500Q15.500 13 13 14Q10 15.500 8.500 13Z" fill="none" stroke="#333" stroke-width=".8"/><circle cx="4.5" cy="4.5" r="2.6" fill="#dc0f0f" stroke="#7a0606" stroke-width=".7"/><circle cx="3.7199999999999998" cy="3.7199999999999998" r="0.9099999999999999" fill="#ff5a4a" opacity=".7"/><circle cx="20" cy="2.5" r="2.6" fill="#dc0f0f" stroke="#7a0606" stroke-width=".7"/><circle cx="19.22" cy="1.72" r="0.9099999999999999" fill="#ff5a4a" opacity=".7"/><circle cx="18.5" cy="19" r="2.6" fill="#dc0f0f" stroke="#7a0606" stroke-width=".7"/><circle cx="17.72" cy="18.22" r="0.9099999999999999" fill="#ff5a4a" opacity=".7"/><circle cx="3" cy="21" r="2.6" fill="#dc0f0f" stroke="#7a0606" stroke-width=".7"/><circle cx="2.2199999999999998" cy="20.22" r="0.9099999999999999" fill="#ff5a4a" opacity=".7"/></svg><svg style="left:1376.5px;top:100.5px" width="8" height="5" viewBox="0 0 8 5"><path d="M0 .3H8L4 4.600Z" fill="#000"/></svg><svg style="left:1390px;top:99px" width="9" height="8" viewBox="0 0 9 8"><path d="M.8 1L3.800 4L.8 7M5.200 1L8.200 4L5.200 7" fill="none" stroke="#000" stroke-width="1.400"/></svg><div class="b" style="left:1400px;top:87px;width:1px;height:33px;background:#bababa;"></div><div class="b" style="left:1401px;top:87px;width:1px;height:33px;background:#fbfbfb;"></div><svg style="left:1405.7px;top:90px" width="3" height="27" viewBox="0 0 3 27"><rect x="0" y="0" width="1.500" height="1.500" fill="#fff"/><rect x=".6" y="0.6" width="1.900" height="1.900" fill="#a6a6a6"/><rect x="0" y="4" width="1.500" height="1.500" fill="#fff"/><rect x=".6" y="4.6" width="1.900" height="1.900" fill="#a6a6a6"/><rect x="0" y="8" width="1.500" height="1.500" fill="#fff"/><rect x=".6" y="8.6" width="1.900" height="1.900" fill="#a6a6a6"/><rect x="0" y="12" width="1.500" height="1.500" fill="#fff"/><rect x=".6" y="12.6" width="1.900" height="1.900" fill="#a6a6a6"/><rect x="0" y="16" width="1.500" height="1.500" fill="#fff"/><rect x=".6" y="16.6" width="1.900" height="1.900" fill="#a6a6a6"/><rect x="0" y="20" width="1.500" height="1.500" fill="#fff"/><rect x=".6" y="20.6" width="1.900" height="1.900" fill="#a6a6a6"/><rect x="0" y="24" width="1.500" height="1.500" fill="#fff"/><rect x=".6" y="24.6" width="1.900" height="1.900" fill="#a6a6a6"/></svg><svg style="left:1415.0px;top:91px" width="24" height="24" viewBox="0 0 24 24"><rect x="12.500" y="2" width="9" height="9" rx="1.500" fill="#f6dede" stroke="#dc0f0f" stroke-width="1.600"/><circle cx="19" cy="4" r="3" fill="none" stroke="#dc0f0f" stroke-width="1.400"/><rect x="2" y="12.500" width="9" height="9" rx="1.500" fill="#f6dede" stroke="#dc0f0f" stroke-width="1.600"/><circle cx="8.500" cy="14.500" r="3" fill="#dc0f0f"/><path d="M4.500 6.500Q5 3.500 8.500 3.500M16 20Q19 20 19.500 17" fill="none" stroke="#8a8a8a" stroke-width="1.600"/></svg><svg style="left:4.7px;top:124px" width="3" height="27" viewBox="0 0 3 27"><rect x="0" y="0" width="1.500" height="1.500" fill="#fff"/><rect x=".6" y="0.6" width="1.900" height="1.900" fill="#a6a6a6"/><rect x="0" y="4" width="1.500" height="1.500" fill="#fff"/><rect x=".6" y="4.6" width="1.900" height="1.900" fill="#a6a6a6"/><rect x="0" y="8" width="1.500" height="1.500" fill="#fff"/><rect x=".6" y="8.6" width="1.900" height="1.900" fill="#a6a6a6"/><rect x="0" y="12" width="1.500" height="1.500" fill="#fff"/><rect x=".6" y="12.6" width="1.900" height="1.900" fill="#a6a6a6"/><rect x="0" y="16" width="1.500" height="1.500" fill="#fff"/><rect x=".6" y="16.6" width="1.900" height="1.900" fill="#a6a6a6"/><rect x="0" y="20" width="1.500" height="1.500" fill="#fff"/><rect x=".6" y="20.6" width="1.900" height="1.900" fill="#a6a6a6"/><rect x="0" y="24" width="1.500" height="1.500" fill="#fff"/><rect x=".6" y="24.6" width="1.900" height="1.900" fill="#a6a6a6"/></svg><svg style="left:14.0px;top:125px" width="24" height="24" viewBox="0 0 24 24"><circle cx="12" cy="12" r="3.600" fill="#d40d0d" stroke="#6e0505" stroke-width=".7"/></svg><svg style="left:44.5px;top:125px" width="24" height="24" viewBox="0 0 24 24"><path d="M3.500 22Q3 4.500 22.500 3.500" fill="none" stroke="#6e0505" stroke-width="2.8" stroke-linecap="round"/><path d="M3.500 22Q3 4.500 22.500 3.500" fill="none" stroke="#d40d0d" stroke-width="1.6" stroke-linecap="round"/><circle cx="8" cy="7.500" r="4.300" fill="#d40d0d" stroke="#6e0505" stroke-width=".7"/></svg><svg style="left:76.0px;top:125px" width="24" height="24" viewBox="0 0 24 24"><path d="M10 1.500H14V22.500H10Z" fill="#d40d0d" stroke="#6e0505" stroke-width=".8" stroke-linejoin="round"/></svg><svg style="left:107.0px;top:125px" width="24" height="24" viewBox="0 0 24 24"><path d="M1 10H23V14H1Z" fill="#d40d0d" stroke="#6e0505" stroke-width=".8" stroke-linejoin="round"/></svg><svg style="left:137.5px;top:125px" width="24" height="24" viewBox="0 0 24 24"><path d="M1.500 15.500L16 1L19 4L4.500 18.500Z" fill="#d40d0d" stroke="#6e0505" stroke-width=".8" stroke-linejoin="round"/><path d="M7.500 20.500L21 7L24 10L10.500 23.500Z" fill="#d40d0d" stroke="#6e0505" stroke-width=".8" stroke-linejoin="round"/></svg><svg style="left:168.5px;top:125px" width="24" height="24" viewBox="0 0 24 24"><path d="M10 2.500H14.500V16H23V21H1.500V16H10Z" fill="#d40d0d" stroke="#6e0505" stroke-width=".8" stroke-linejoin="round"/></svg><svg style="left:199.5px;top:125px" width="24" height="24" viewBox="0 0 24 24"><path d="M2.800 8.300Q13.500 8 15.500 21.500" fill="none" stroke="#6e0505" stroke-width="3.8" stroke-linecap="round"/><path d="M2.800 8.300Q13.500 8 15.500 21.500" fill="none" stroke="#d40d0d" stroke-width="2.6" stroke-linecap="round"/><path d="M6.800 3.500L9.800 .5L23.800 15L20.800 18Z" fill="#d40d0d" stroke="#6e0505" stroke-width=".8" stroke-linejoin="round"/></svg><svg style="left:231.0px;top:125px" width="24" height="24" viewBox="0 0 24 24"><path d="M4.500 5.200H19.500V9.800H4.500Z" fill="#d40d0d" stroke="#6e0505" stroke-width=".8" stroke-linejoin="round"/><path d="M4.500 13.800H19.500V18.500H4.500Z" fill="#d40d0d" stroke="#6e0505" stroke-width=".8" stroke-linejoin="round"/></svg><svg style="left:261.5px;top:125px" width="24" height="24" viewBox="0 0 24 24"><path d="M2 3.800L11 12L2 21V15.500L6 12L2 8.500Z" fill="#d40d0d" stroke="#6e0505" stroke-width=".8" stroke-linejoin="round"/><path d="M23.500 3.800L14 12L23.500 21V15.500L19.500 12L23.500 8.500Z" fill="#d40d0d" stroke="#6e0505" stroke-width=".8" stroke-linejoin="round"/></svg><svg style="left:292.5px;top:125px" width="24" height="24" viewBox="0 0 24 24"><circle cx="12.400" cy="12" r="9.200" fill="#fff" stroke="#0a0a0a" stroke-width="2.700"/><circle cx="12.400" cy="12" r="7.500" fill="none" stroke="#d40d0d" stroke-width="1.100"/><path d="M6.800 7L18 17" stroke="#6e0505" stroke-width="3.200"/><path d="M6.800 7L18 17" stroke="#d40d0d" stroke-width="2.200"/></svg><div class="b" style="left:323px;top:125px;width:1px;height:24px;background:#d0d0d0;"></div><div class="b" style="left:324px;top:125px;width:1px;height:24px;background:#fafafa;"></div><svg style="left:329.5px;top:125px" width="24" height="24" viewBox="0 0 24 24"><path d="M7.500 11V7.500Q7.500 3.500 12 3.500Q16.500 3.500 16.500 7.500V11" fill="none" stroke="#6e0505" stroke-width="3.200"/><path d="M7.500 11V7.500Q7.500 3.500 12 3.500Q16.500 3.500 16.500 7.500V11" fill="none" stroke="#d40d0d" stroke-width="2"/><path d="M4.500 10.500H19.500V22.500H4.500Z" fill="#d40d0d" stroke="#6e0505" stroke-width=".8" stroke-linejoin="round"/><path d="M5.500 14H18.500M5.500 17H18.500M5.500 20H18.500" stroke="#a80808" stroke-width=".8"/></svg><svg style="left:360.5px;top:125px" width="24" height="24" viewBox="0 0 24 24"><path d="M1.500 6H4.500V10.500H19.500V6H22.500V18.500H19.500V14H4.500V18.500H1.500Z" fill="#d40d0d" stroke="#6e0505" stroke-width=".8" stroke-linejoin="round"/></svg><svg style="left:391.5px;top:125px" width="24" height="24" viewBox="0 0 24 24"><path d="M5.500 1.500H18.500V4.500H14V19.500H18.500V22.500H5.500V19.500H10V4.500H5.500Z" fill="#d40d0d" stroke="#6e0505" stroke-width=".8" stroke-linejoin="round"/></svg><svg style="left:423.0px;top:125px" width="24" height="24" viewBox="0 0 24 24"><path d="M1.500 22.500L3.500 13.500L6.500 16L16 6.500L13.500 3.500L22.500 1.500L20.500 10.500L18 8L8.500 17.500L11 20.500Z" fill="#d40d0d" stroke="#6e0505" stroke-width=".8" stroke-linejoin="round"/></svg><svg style="left:453.5px;top:125px" width="24" height="24" viewBox="0 0 24 24"><path d="M12 12L18.500 5.500" fill="none" stroke="#6e0505" stroke-width="2.9" stroke-linecap="butt"/><path d="M12 12L18.500 5.500" fill="none" stroke="#d40d0d" stroke-width="1.7" stroke-linecap="butt"/><circle cx="12" cy="12" r="9.600" fill="none" stroke="#6e0505" stroke-width="3"/><circle cx="12" cy="12" r="9.600" fill="none" stroke="#d40d0d" stroke-width="1.900"/></svg><svg style="left:483.5px;top:135.0px" width="8" height="5" viewBox="0 0 8 5"><path d="M0 .3H8L4 4.600Z" fill="#000"/></svg><svg style="left:496.5px;top:125px" width="24" height="24" viewBox="0 0 24 24"><path d="M21.500 2.500L2.500 12L21.500 21.500" fill="none" stroke="#6e0505" stroke-width="3.2" stroke-linecap="round"/><path d="M21.500 2.500L2.500 12L21.500 21.500" fill="none" stroke="#d40d0d" stroke-width="2" stroke-linecap="round"/><path d="M14.500 6.500Q18 12 14.500 17.500" fill="none" stroke="#6e0505" stroke-width="2.8" stroke-linecap="butt"/><path d="M14.500 6.500Q18 12 14.500 17.500" fill="none" stroke="#d40d0d" stroke-width="1.6" stroke-linecap="butt"/></svg><svg style="left:527.5px;top:125px" width="24" height="24" viewBox="0 0 24 24"><path d="M3 1.500L14.500 13L15.500 23" fill="none" stroke="#d3d3d3" stroke-width="2.600" stroke-linecap="round" stroke-linejoin="round"/><path d="M1.500 12H23" stroke="#a4a4a4" stroke-width="1.800"/></svg><div class="b" style="left:558px;top:125px;width:1px;height:24px;background:#d0d0d0;"></div><div class="b" style="left:559px;top:125px;width:1px;height:24px;background:#fafafa;"></div><svg style="left:565.0px;top:125px" width="24" height="24" viewBox="0 0 24 24"><rect x="10.500" y="2" width="12" height="12" fill="#fff" stroke="#1c3f78" stroke-width="3.200"/><rect x="10.500" y="2" width="12" height="12" fill="none" stroke="#4a80c8" stroke-width="1.900"/><rect x="2.500" y="10" width="12" height="12" fill="#fff" stroke="#6e0505" stroke-width="3.200"/><rect x="2.500" y="10" width="12" height="12" fill="none" stroke="#d40d0d" stroke-width="2"/></svg>
<!-- sec_left -->
<div class="b" style="left:2px;top:155px;width:267px;height:19px;background:#dcdcdc;border:1px solid #bdbdbd;"></div><span class="t" style="left:3px;top:159.34px;font-size:12px;color:#000;transform:scaleX(0.8406);">Combo View</span><svg style="left:255px;top:160px" width="10" height="10" viewBox="0 0 10 10"><path d="M3.500 1H9V5.500H3.500ZM1 4H6.500V9H1Z" fill="#dcdcdc" stroke="#000" stroke-width="1.300"/></svg><div class="b" style="left:3px;top:178px;width:49px;height:22px;background:#f0f0f0;border:1px solid #d9d9d9;border-bottom:none;"></div><span class="t" style="left:12px;top:182.84px;font-size:12px;color:#000;transform:scaleX(0.8873);">Model</span><div class="b" style="left:51px;top:176px;width:72px;height:25px;background:#fff;border:1px solid #d9d9d9;border-bottom:none;"></div><svg style="left:64px;top:179px" width="18" height="16" viewBox="0 0 18 16"><path d="M2 3.500L5.500 1L14.500 11L11 13.500Z" fill="#3a5f8f" stroke="#22344f" stroke-width=".8"/><path d="M11 13.500L14.500 11L16 15Z" fill="#d9c9a0" stroke="#555" stroke-width=".5"/></svg><span class="t" style="left:84px;top:181.84px;font-size:12px;color:#000;transform:scaleX(0.8802);">Tasks</span><div class="b" style="left:2px;top:199px;width:265px;height:552px;background:#fff;border-top:1px solid #dcdcdc;border-right:1px solid #dcdcdc;border-bottom:1px solid #e2e2e2;"></div><div class="b" style="left:3px;top:201px;width:262px;height:547px;background:#fff;border:1px solid #7a8290;"></div><div class="b" style="left:4px;top:202px;width:243px;height:545px;background:linear-gradient(#acacc2 0px,#333365 286px);"></div><div class="b" style="left:248px;top:202px;width:16px;height:545px;background:#f0f0f0;"></div><div class="b" style="left:248px;top:219px;width:15px;height:292px;background:#cdcdcd;"></div><svg style="left:248px;top:202px" width="16" height="545" viewBox="0 0 16 545"><path d="M4 11.500L7.500 8L11 11.500M4 535L7.500 538.500L11 535" fill="none" stroke="#505050" stroke-width="1.500"/></svg><div class="b" style="left:90px;top:221px;width:71px;height:20px;background:#e1e1e1;border:1px solid #adadad;"></div><span class="t" style="left:111px;top:224.84px;font-size:12px;color:#000;transform:scaleX(0.9127);">Close</span><div class="b" style="left:12px;top:259px;width:227px;height:25px;background:linear-gradient(90deg,#ffffff 0%,#f4f6fe 25%,#d8dff6 70%,#c9d3f4 100%);border-radius:5px 5px 0 0;border-bottom:1px solid #f4f6ff;"></div><svg style="left:20px;top:262px" width="16" height="19" viewBox="0 0 16 19"><path d="M1.500 1.500H13.500V16.500H1.500Z" fill="#f2f2f2" stroke="#d8d8d8" stroke-width="1"/><path d="M1 17.200H14" stroke="#9a9a9a" stroke-width="1"/><circle cx="11.500" cy="3.200" r="2.300" fill="#f4e23a"/></svg><span class="t" style="left:40px;top:266.34px;font-size:12px;color:#2a56c6;font-weight:bold;transform:scaleX(0.9790);">Solver messages</span><svg style="left:219.5px;top:263.5px" width="16" height="16" viewBox="-8 -8 16 16"><circle r="7.300" fill="#fff" stroke="#c3cbe8" stroke-width="1"/><path d="M-3-1L0-4L3-1M-3 3.500L0 .5L3 3.500" fill="none" stroke="#1d3f9c" stroke-width="1.400"/></svg><div class="b" style="left:12px;top:284px;width:227px;height:133px;background:#d6dcf5;border:1px solid #fff;border-top:none;"></div><span class="t" style="left:26px;top:298.84px;font-size:12px;color:#1b8c1b;transform:scaleX(1.0060);">Fully constrained sketch</span><span class="t" style="left:26px;top:318.84px;font-size:12px;color:#1b8c1b;transform:scaleX(1.0076);">Solved in 0 sec</span><div class="b" style="left:26px;top:339px;width:13px;height:13px;background:#fff;border:1px solid #333;"></div><span class="t" style="left:44px;top:339.84px;font-size:12px;color:#000;transform:scaleX(0.8916);">Auto Remove Redundants</span><div class="b" style="left:26px;top:385px;width:13px;height:13px;background:#fff;border:1px solid #333;"></div><span class="t" style="left:44px;top:385.84px;font-size:12px;color:#000;transform:scaleX(0.8994);">Auto Update</span><div class="b" style="left:130px;top:381px;width:94px;height:21px;background:#e1e1e1;border:1px solid #adadad;"></div><span class="t" style="left:158.5px;top:385.84px;font-size:12px;color:#000;transform:scaleX(0.9045);">Update</span><div class="b" style="left:12px;top:426px;width:227px;height:25px;background:linear-gradient(90deg,#ffffff 0%,#f4f6fe 25%,#d8dff6 70%,#c9d3f4 100%);border-radius:5px 5px 0 0;border-bottom:1px solid #f4f6ff;"></div><svg style="left:20px;top:429px" width="16" height="19" viewBox="0 0 16 19"><path d="M1.500 1.500H13.500V16.500H1.500Z" fill="#f2f2f2" stroke="#d8d8d8" stroke-width="1"/><path d="M1 17.200H14" stroke="#9a9a9a" stroke-width="1"/><circle cx="11.500" cy="3.200" r="2.300" fill="#f4e23a"/></svg><span class="t" style="left:40px;top:433.34px;font-size:12px;color:#2a56c6;font-weight:bold;transform:scaleX(0.9545);">Edit controls</span><svg style="left:219.5px;top:430.5px" width="16" height="16" viewBox="-8 -8 16 16"><circle r="7.300" fill="#fff" stroke="#c3cbe8" stroke-width="1"/><path d="M-3-1L0-4L3-1M-3 3.500L0 .5L3 3.500" fill="none" stroke="#1d3f9c" stroke-width="1.400"/></svg><div class="b" style="left:12px;top:461px;width:227px;height:25px;background:linear-gradient(90deg,#ffffff 0%,#f4f6fe 25%,#d8dff6 70%,#c9d3f4 100%);border-radius:5px 5px 0 0;border-bottom:1px solid #f4f6ff;"></div><svg style="left:20px;top:464px" width="16" height="19" viewBox="0 0 16 19"><path d="M1.500 1.500H13.500V16.500H1.500Z" fill="#f2f2f2" stroke="#d8d8d8" stroke-width="1"/><path d="M1 17.200H14" stroke="#9a9a9a" stroke-width="1"/><circle cx="11.500" cy="3.200" r="2.300" fill="#f4e23a"/></svg><span class="t" style="left:40px;top:468.34px;font-size:12px;color:#4485f0;font-weight:bold;transform:scaleX(0.9749);">Constraints</span><svg style="left:219.5px;top:465.5px" width="16" height="16" viewBox="-8 -8 16 16"><circle r="7.300" fill="#fff" stroke="#c3cbe8" stroke-width="1"/><path d="M-3-1L0-4L3-1M-3 3.500L0 .5L3 3.500" fill="none" stroke="#1d3f9c" stroke-width="1.400"/></svg><div class="b" style="left:12px;top:486px;width:227px;height:262px;background:#d6dcf5;border:1px solid #fff;border-top:none;border-bottom:none;"></div><span class="t" style="left:26px;top:502.34px;font-size:12px;color:#000;transform:scaleX(0.9000);">Filter:</span><div class="b" style="left:129px;top:499px;width:96px;height:20px;background:#e1e1e1;border:1px solid #adadad;"></div><span class="t" style="left:133px;top:502.84px;font-size:12px;color:#000;transform:scaleX(0.8248);">All</span><svg style="left:211px;top:506px" width="9" height="6" viewBox="0 0 9 6"><path d="M.5.800H8.500L4.500 5Z" fill="#000"/></svg><div class="b" style="left:26px;top:527px;width:13px;height:13px;background:#fff;border:1px solid #333;"></div><svg style="left:26px;top:527px" width="13" height="13" viewBox="0 0 13 13"><path d="M2.8 6.6L5.2 9.2L10.3 3.6" fill="none" stroke="#222" stroke-width="1.2"/></svg><span class="t" style="left:43px;top:527.84px;font-size:12px;color:#000;transform:scaleX(0.9067);">Hide Internal Alignment</span><div class="b" style="left:26px;top:550px;width:13px;height:13px;background:#fff;border:1px solid #333;"></div><span class="t" style="left:43px;top:550.34px;font-size:12px;color:#000;transform:scaleX(0.9205);">Extended Information</span><div class="b" style="left:26px;top:571px;width:199px;height:177px;background:#fff;border:1px solid #82878f;border-bottom:none;overflow:hidden;"><div class="b" style="left:4px;top:4px;width:13px;height:13px;background:#fff;border:1px solid #333;"></div><svg style="left:4px;top:4px" width="13" height="13" viewBox="0 0 13 13"><path d="M2.8 6.6L5.2 9.2L10.3 3.6" fill="none" stroke="#222" stroke-width="1.2"/></svg><svg style="left:27.700000000000003px;top:7.5px" width="6" height="6"><circle cx="3" cy="3" r="2.500" fill="#cc0a0a"/></svg><span class="t" style="left:45px;top:4.84px;font-size:12px;color:#000;transform:scaleX(0.9778);">Constraint1</span><div class="b" style="left:4px;top:22px;width:13px;height:13px;background:#fff;border:1px solid #333;"></div><svg style="left:4px;top:22px" width="13" height="13" viewBox="0 0 13 13"><path d="M2.8 6.6L5.2 9.2L10.3 3.6" fill="none" stroke="#222" stroke-width="1.2"/></svg><svg style="left:27.700000000000003px;top:25.5px" width="6" height="6"><circle cx="3" cy="3" r="2.500" fill="#cc0a0a"/></svg><span class="t" style="left:45px;top:22.84px;font-size:12px;color:#000;transform:scaleX(0.9859);">Constraint2</span><div class="b" style="left:4px;top:40px;width:13px;height:13px;background:#fff;border:1px solid #333;"></div><svg style="left:4px;top:40px" width="13" height="13" viewBox="0 0 13 13"><path d="M2.8 6.6L5.2 9.2L10.3 3.6" fill="none" stroke="#222" stroke-width="1.2"/></svg><svg style="left:27.700000000000003px;top:43.5px" width="6" height="6"><circle cx="3" cy="3" r="2.500" fill="#cc0a0a"/></svg><span class="t" style="left:45px;top:40.84px;font-size:12px;color:#000;transform:scaleX(0.9859);">Constraint3</span><div class="b" style="left:4px;top:58px;width:13px;height:13px;background:#fff;border:1px solid #333;"></div><svg style="left:4px;top:58px" width="13" height="13" viewBox="0 0 13 13"><path d="M2.8 6.6L5.2 9.2L10.3 3.6" fill="none" stroke="#222" stroke-width="1.2"/></svg><svg style="left:26px;top:56px" width="10" height="17" viewBox="0 0 10 17"><path d="M.5 1.200H9.500M.5 15.800H9.500M5 1V16" fill="none" stroke="#cc0a0a" stroke-width="1.900"/></svg><span class="t" style="left:45px;top:58.84px;font-size:12px;color:#000;transform:scaleX(0.9932);">Constraint4 (0 mm)</span><div class="b" style="left:4px;top:76px;width:13px;height:13px;background:#fff;border:1px solid #333;"></div><svg style="left:4px;top:76px" width="13" height="13" viewBox="0 0 13 13"><path d="M2.8 6.6L5.2 9.2L10.3 3.6" fill="none" stroke="#222" stroke-width="1.2"/></svg><div class="b" style="left:29.5px;top:75.5px;width:2.6px;height:14px;background:#cc0a0a;"></div><span class="t" style="left:45px;top:76.84px;font-size:12px;color:#000;transform:scaleX(0.9859);">Constraint5</span><div class="b" style="left:4px;top:94px;width:13px;height:13px;background:#fff;border:1px solid #333;"></div><svg style="left:4px;top:94px" width="13" height="13" viewBox="0 0 13 13"><path d="M2.8 6.6L5.2 9.2L10.3 3.6" fill="none" stroke="#222" stroke-width="1.2"/></svg><div class="b" style="left:29.5px;top:93.5px;width:2.6px;height:14px;background:#cc0a0a;"></div><span class="t" style="left:45px;top:94.84px;font-size:12px;color:#000;transform:scaleX(0.9859);">Constraint6</span><div class="b" style="left:4px;top:112px;width:13px;height:13px;background:#fff;border:1px solid #333;"></div><svg style="left:4px;top:112px" width="13" height="13" viewBox="0 0 13 13"><path d="M2.8 6.6L5.2 9.2L10.3 3.6" fill="none" stroke="#222" stroke-width="1.2"/></svg><svg style="left:27.700000000000003px;top:115.5px" width="6" height="6"><circle cx="3" cy="3" r="2.500" fill="#cc0a0a"/></svg><span class="t" style="left:45px;top:112.84px;font-size:12px;color:#000;transform:scaleX(0.9859);">Constraint7</span><div class="b" style="left:4px;top:130px;width:13px;height:13px;background:#fff;border:1px solid #333;"></div><svg style="left:4px;top:130px" width="13" height="13" viewBox="0 0 13 13"><path d="M2.8 6.6L5.2 9.2L10.3 3.6" fill="none" stroke="#222" stroke-width="1.2"/></svg><div class="b" style="left:29.5px;top:129.5px;width:2.6px;height:14px;background:#cc0a0a;"></div><span class="t" style="left:45px;top:130.84px;font-size:12px;color:#000;transform:scaleX(0.9859);">Constraint8</span><div class="b" style="left:4px;top:148px;width:13px;height:13px;background:#fff;border:1px solid #333;"></div><svg style="left:4px;top:148px" width="13" height="13" viewBox="0 0 13 13"><path d="M2.8 6.6L5.2 9.2L10.3 3.6" fill="none" stroke="#222" stroke-width="1.2"/></svg><svg style="left:27.700000000000003px;top:151.5px" width="6" height="6"><circle cx="3" cy="3" r="2.500" fill="#cc0a0a"/></svg><span class="t" style="left:45px;top:148.84px;font-size:12px;color:#000;transform:scaleX(0.9859);">Constraint9</span><div class="b" style="left:4px;top:166px;width:13px;height:13px;background:#fff;border:1px solid #333;"></div><svg style="left:4px;top:166px" width="13" height="13" viewBox="0 0 13 13"><path d="M2.8 6.6L5.2 9.2L10.3 3.6" fill="none" stroke="#222" stroke-width="1.2"/></svg><svg style="left:26px;top:164px" width="10" height="17" viewBox="0 0 10 17"><path d="M.5 1.200H9.500M.5 15.800H9.500M5 1V16" fill="none" stroke="#cc0a0a" stroke-width="1.900"/></svg><span class="t" style="left:45px;top:166.84px;font-size:12px;color:#000;transform:scaleX(0.9885);">Constraint10 (0.3 mm)</span><div class="b" style="left:180px;top:1px;width:17px;height:176px;background:#f0f0f0;"></div><div class="b" style="left:181px;top:19px;width:15px;height:49px;background:#cdcdcd;"></div><svg style="left:180px;top:1px" width="17" height="20" viewBox="0 0 17 20"><path d="M4.500 11.500L8.500 7.500L12.500 11.500" fill="none" stroke="#505050" stroke-width="1.300"/></svg></div><div class="b" style="left:3px;top:747px;width:262px;height:1px;background:#7a8290;"></div><div class="b" style="left:2px;top:748px;width:264px;height:2px;background:#fff;"></div><div class="b" style="left:2px;top:750px;width:265px;height:1px;background:#e2e2e2;"></div><div class="b" style="left:0px;top:751px;width:270px;height:6px;background:#f0f0f0;"></div>
<!-- sec_view -->
<div class="b" style="left:273px;top:154px;width:1107px;height:575px;background:linear-gradient(#333365 0px,#9797aa 574px);overflow:hidden;"><svg style="left:0;top:0" width="1107" height="575" viewBox="273 154 1107 575"><rect x="273" y="426" width="1107" height="1.6" fill="#c8555a"/><rect x="612" y="168" width="506.5" height="516" fill="#f3fff3"/><path d="M633 228 H1140.5 A976 976 0 0 1 1140.5 625 H1093.5 V622.5 A32 32 0 0 0 1029.5 622.5 V625 H633 A21 21 0 0 1 612 604 V249 A21 21 0 0 1 633 228 Z M1080.5 389.5 V386.5 A13.5 13.5 0 0 1 1094 373 H1122 A14 14 0 0 1 1136 387 V465 A14 14 0 0 1 1122 479 H1094 A13.5 13.5 0 0 1 1080.5 465.5 V462.5 A36.5 36.5 0 0 1 1080.5 389.5 Z" fill="#0a55ff" fill-rule="evenodd" stroke="#111" stroke-width="1.6" stroke-linejoin="round"/><rect x="463.2" y="154" width="1.8" height="574" fill="#3c94f8"/><rect x="885.2" y="154" width="1.8" height="574" fill="#3c94f8"/><rect x="1307.2" y="154" width="1.8" height="574" fill="#3c94f8"/><rect x="464" y="425.6" width="844" height="1.9" fill="#3c94f8"/><rect x="612" y="214.3" width="506" height="1.5" fill="#22a322"/><rect x="612" y="636" width="506" height="1.5" fill="#22a322"/><rect x="612" y="167" width="506" height="3.2" fill="#00ff00"/><rect x="612" y="180" width="506" height="3" fill="#00ff00"/><rect x="612" y="669.6" width="403" height="2.6" fill="#00ff00"/><rect x="612" y="682" width="473" height="3.2" fill="#00ff00"/><rect x="611" y="168" width="2" height="82" fill="#22a322"/><rect x="611" y="604" width="2" height="80" fill="#22a322"/><rect x="1117.4" y="168" width="1.3" height="60" fill="#ff2a00"/><rect x="1118.6" y="168" width="1" height="60" fill="#22a322"/><rect x="1117.6" y="373.5" width="1.8" height="105" fill="#22a322"/><rect x="1117.6" y="626" width="2" height="58" fill="#00ff00"/><circle cx="1080.3" cy="426.1" r="29.8" fill="none" stroke="#22a322" stroke-width="1.3"/><rect x="1040" y="425.6" width="125" height="1.9" fill="#3c94f8"/><path d="M1032.5 671 V633.5 A29.7 29.7 0 0 1 1091.9 633.5 V671" fill="none" stroke="#00ff00" stroke-width="2"/><circle cx="1118.5" cy="168.5" r="3.6" fill="#00ff00"/><circle cx="1118.5" cy="181.5" r="3.4" fill="#00ff00"/><circle cx="1031.5" cy="633" r="2.8" fill="#00ff00"/><circle cx="1062" cy="633" r="2.8" fill="#00ff00"/><circle cx="1091" cy="633" r="2.8" fill="#00ff00"/><circle cx="1119" cy="637.5" r="3.8" fill="#00ff00"/><circle cx="1032" cy="670.5" r="3" fill="#00ff00"/><circle cx="1091" cy="671" r="3" fill="#00ff00"/><circle cx="1119" cy="670" r="3" fill="#00ff00"/><circle cx="1119" cy="684" r="3.4" fill="#00ff00"/><circle cx="612.5" cy="168" r="2.5" fill="#00ff00"/><circle cx="612.5" cy="182" r="2.5" fill="#00ff00"/><circle cx="612.3" cy="671" r="3" fill="#00ff00"/><circle cx="612.3" cy="684" r="3.2" fill="#00ff00"/><circle cx="612.5" cy="215" r="1.8" fill="#00ff00"/><circle cx="612.5" cy="637" r="1.8" fill="#00ff00"/><circle cx="1118.5" cy="215" r="1.6" fill="#00ff00"/><circle cx="886" cy="426.5" r="3.4" fill="none" stroke="#2ee08a" stroke-width="1.6"/><path d="M607.5 163.5L617.5 173.5M617.5 163.5L607.5 173.5" stroke="#fff" stroke-width="1.1"/><path d="M607.5 178L617.5 188M617.5 178L607.5 188" stroke="#fff" stroke-width="1.1"/><path d="M607 664.5L617 674.5M617 664.5L607 674.5" stroke="#fff" stroke-width="1.1"/><path d="M607 678.5L617 688.5M617 678.5L607 688.5" stroke="#fff" stroke-width="1.1"/><text x="613" y="178" font-family="Liberation Serif,serif" font-size="17" fill="#fff">0.40 mm</text><text x="613" y="674.5" font-family="Liberation Serif,serif" font-size="17" fill="#fff">0.40 mm</text><rect x="625" y="170" width="1.6" height="12.5" fill="#ff2a00"/><rect x="859" y="166.6" width="13" height="1.8" fill="#ff2a00"/><rect x="619.2" y="680" width="1.8" height="13.7" fill="#ff2a00"/><rect x="615.5" y="665.4" width="9" height="2.1" fill="#ff2a00"/><rect x="615.5" y="670" width="9" height="2.1" fill="#ff2a00"/><text x="629" y="676.8" font-family="DejaVu Sans,sans-serif" font-size="10" fill="#ff2a00">19</text><rect x="1122.5" y="171.3" width="8.6" height="2.2" fill="#ff2a00"/><rect x="1122.5" y="176" width="8.6" height="2.4" fill="#ff2a00"/><text x="1134" y="182.5" font-family="DejaVu Sans,sans-serif" font-size="10" fill="#ff2a00">28</text><g transform="translate(1090.3,203.7)" font-family="DejaVu Sans,sans-serif" font-size="22.5" fill="#d9361a"><text x="0" y="0">0</text><text x="18.5" y="0" textLength="36.5" lengthAdjust="spacingAndGlyphs">mm</text></g><path d="M1107 189.5V202.5L1118 196ZM1130.5 189.5V202.5L1120 196Z" fill="#ff2a00"/><rect x="1112" y="195.2" width="40" height="1.6" fill="#ff2a00"/><rect x="1033" y="632.3" width="91" height="1.7" fill="#ff2a00"/><rect x="1015" y="670" width="104" height="1.8" fill="#ff2a00"/><rect x="1085" y="682.6" width="33" height="2" fill="#ff8a00"/><rect x="1039.9" y="637.5" width="1.6" height="44.5" fill="#ff2a00"/><rect x="1097.5" y="599" width="1.6" height="44" fill="#ff2a00"/><rect x="1109.7" y="662" width="1.6" height="58.5" fill="#ff2a00"/><rect x="1086.3" y="680" width="1.6" height="13.5" fill="#ff2a00"/><rect x="1082.5" y="665" width="9" height="2" fill="#ff2a00"/><rect x="1082.5" y="670" width="9" height="2" fill="#ff2a00"/><text x="1095" y="678.5" font-family="DejaVu Sans,sans-serif" font-size="9.5" font-weight="bold" fill="#ff2a00">28  19</text><path d="M1035.1 661.5H1046.1L1040.6 670.5ZM1035.1 680.5H1046.1L1040.6 671.5Z" fill="#ff2a00"/><path d="M1092.8 624.5H1103.8L1098.3 633.5ZM1092.8 643.5H1103.8L1098.3 634.5Z" fill="#ff2a00"/><path d="M1104.5 663H1115.5L1110 672ZM1104.5 682H1115.5L1110 673Z" fill="#ff2a00"/><g transform="translate(1048.7,698.6) rotate(-90)" font-family="DejaVu Sans,sans-serif" font-size="22.5" fill="#d9361a"><text x="0" y="0">0</text><text x="18.5" y="0" textLength="36.5" lengthAdjust="spacingAndGlyphs">mm</text></g><g transform="translate(1105.5,659.8) rotate(-90)" font-family="DejaVu Sans,sans-serif" font-size="22.5" fill="#d9361a"><text x="0" y="0">0</text><text x="18.5" y="0" textLength="36.5" lengthAdjust="spacingAndGlyphs">mm</text></g><g transform="translate(1118.2,714.6) rotate(-90)" font-family="DejaVu Sans,sans-serif" font-size="22.5" fill="#d9361a"><text x="0" y="0" textLength="31.5" lengthAdjust="spacingAndGlyphs">0.3</text><text x="37.5" y="0" textLength="36.5" lengthAdjust="spacingAndGlyphs">mm</text></g><text x="472.2" y="412.3" font-family="Liberation Serif,serif" font-size="47" fill="#3d9bff" textLength="139.5" lengthAdjust="spacingAndGlyphs">X_Axis</text><rect x="1260" y="199.5" width="75" height="75" rx="15" fill="#dfe4ee"/><rect x="1264" y="203.5" width="67" height="67" rx="13" fill="#e6eaf2"/><rect x="1270.5" y="210" width="54" height="53.5" rx="9" fill="#f8f9fb"/><path d="M1272.5 220V254" stroke="#9fd6a8" stroke-width="1"/><path d="M1281 261.5H1312" stroke="#e8a6a6" stroke-width="1"/><text x="1282.5" y="242.8" font-family="Liberation Sans,sans-serif" font-size="17.4" fill="#1a1a1a" textLength="29.5" lengthAdjust="spacingAndGlyphs">Top</text><path d="M1297 162.5L1306 171H1288ZM1297 312L1306 303H1288ZM1222 237L1231 228V246ZM1372 237L1363 228V246Z" fill="#e2e7ef"/><path d="M1274.5 168.5L1277 174.5Q1261 180 1250.5 191L1252.5 193.5L1243 194.5L1244.5 184.5L1246.8 187Q1258 175 1274.5 168.5Z" fill="#e2e7ef"/><path d="M1319.5 168.5L1317 174.5Q1333 180 1343.5 191L1341.5 193.5L1351 194.5L1349.500 184.5L1347.2 187Q1336 175 1319.5 168.5Z" fill="#e2e7ef"/><path d="M1323.500 289L1335 284L1346 289L1335 294Z" fill="#f4f4f4"/><path d="M1323.500 289L1335 294V306L1323.500 300.500Z" fill="#c9c9c9"/><path d="M1346 289L1335 294V306L1346 300.500Z" fill="#dedede"/><path d="M1350 291H1364L1357 299Z" fill="#3c3c44"/><text x="1256" y="279.5" font-family="Liberation Sans,sans-serif" font-size="9" fill="#1010ff">Z</text><path d="M1262 272L1271 262" stroke="#1818ff" stroke-width=".8" stroke-dasharray="2 6"/><path d="M1351.500 699V681" stroke="#1d7a1d" stroke-width="1.500"/><path d="M1349.300 686.500L1351.500 680L1353.700 686.500Z" fill="#1d7a1d"/><path d="M1351.500 699.500H1370.500" stroke="#8e1c1c" stroke-width="1.500"/><path d="M1363.500 697.800L1369 699.500L1363.500 701.200Z" fill="#8e1c1c"/><path d="M1351.500 696.800L1354.200 699.500L1351.500 702.200L1348.800 699.500Z" fill="#1e1e90"/><text x="1353.600" y="679.600" font-family="Liberation Sans,sans-serif" font-size="9.500" fill="#000">Y</text><text x="1353.800" y="699.600" font-family="Liberation Sans,sans-serif" font-size="9.500" fill="#000">Z</text><text x="1373.600" y="699.600" font-family="Liberation Sans,sans-serif" font-size="9.500" fill="#000">X</text></svg></div>
<!-- sec_right -->
<div class="b" style="left:1384px;top:155px;width:62px;height:19px;background:#dcdcdc;border:1px solid #bdbdbd;"></div><span class="t" style="left:1386px;top:159.34px;font-size:12px;color:#000;transform:scaleX(0.8464);">kicad ...</span><svg style="left:1431px;top:160px" width="10" height="10" viewBox="0 0 10 10"><path d="M3.500 1H9V5.500H3.500ZM1 4H6.500V9H1Z" fill="#dcdcdc" stroke="#000" stroke-width="1.300"/></svg><div class="b" style="left:1392px;top:181px;width:26px;height:26px;background:#e3e3e3;border:1px solid #c6c6c6;"></div><svg style="left:1398px;top:186px" width="14" height="15" viewBox="0 0 14 15"><path d="M13 1V14L1 7.500Z" fill="#8e8e8e"/></svg><div class="b" style="left:1424px;top:181px;width:26px;height:26px;background:#e3e3e3;border:1px solid #c6c6c6;"></div><div class="b" style="left:1430px;top:186px;width:14px;height:13px;background:linear-gradient(135deg,#fff,#d8d8d8);box-shadow:2px 2px 1px #888;"></div><div class="b" style="left:1389px;top:220px;width:70px;height:20px;background:#fff;border:1px solid #7a7a7a;"></div><span class="t" style="left:1432px;top:224.14px;font-size:12px;color:#000;">90</span><div class="b" style="left:1389px;top:261px;width:70px;height:20px;background:#fff;border:1px solid #7a7a7a;"></div><span class="t" style="left:1432px;top:265.14px;font-size:12px;color:#000;">90</span><div class="b" style="left:1389px;top:302px;width:70px;height:20px;background:#fff;border:1px solid #7a7a7a;"></div><span class="t" style="left:1432px;top:306.14px;font-size:12px;color:#000;">90</span><div class="b" style="left:1388px;top:340px;width:70px;height:20px;background:#fff;border:1px solid #7a7a7a;"></div><span class="t" style="left:1421.5px;top:344.14px;font-size:12px;color:#000;">0.10</span><div class="b" style="left:1388px;top:381px;width:70px;height:20px;background:#fff;border:1px solid #7a7a7a;"></div><span class="t" style="left:1421.5px;top:385.14px;font-size:12px;color:#000;">0.10</span><div class="b" style="left:1388px;top:422px;width:70px;height:20px;background:#fff;border:1px solid #7a7a7a;"></div><span class="t" style="left:1421.5px;top:426.14px;font-size:12px;color:#000;">0.10</span><div class="b" style="left:1389px;top:457px;width:70px;height:34px;background:#e3e3e3;border:1px solid #c6c6c6;"></div><svg style="left:1402px;top:458px" width="32" height="32" viewBox="0 0 26 26"><rect x="6" y="9" width="14" height="10" fill="#fff" stroke="#888" stroke-width=".6"/><path d="M8 19h3v3H8zM12 19h3v3h-3zM16 19h3v3h-3zM17 6h3v3h-3z" fill="#1fc21f"/><path d="M7 3Q14 1 17 7L19.500 5.500L18.500 12L12.500 9.500L15 8Q12.500 4.500 7.500 6Z" fill="#3fbf2f" stroke="#1c7a14" stroke-width=".7"/></svg><div class="b" style="left:1389px;top:496px;width:70px;height:34px;background:#e3e3e3;border:1px solid #c6c6c6;"></div><svg style="left:1402px;top:497px" width="32" height="32" viewBox="0 0 26 26"><rect x="5" y="6" width="16" height="11" fill="#454545"/><path d="M7 3h3v3H7zM11.500 3h3v3h-3zM16 3h3v3h-3z" fill="#8a8a8a"/><rect x="14" y="8" width="8" height="8" fill="#3b7fd6" stroke="#1d4d94" stroke-width=".6"/><path d="M7 16Q12 21 17 18.500L16.500 16L22.500 19.500L17.500 23.500L17.500 21.200Q11 23 7 16Z" fill="#3fbf2f" stroke="#1c7a14" stroke-width=".7"/></svg><div class="b" style="left:1389px;top:534px;width:70px;height:34px;background:#e3e3e3;border:1px solid #c6c6c6;"></div><svg style="left:1402px;top:535px" width="32" height="32" viewBox="0 0 26 26"><path d="M3 14L13 9L23 13L12 19Z" fill="#f2c91f" stroke="#a8860c" stroke-width=".7"/><path d="M3 14V18L12 23.500V19Z" fill="#d9a90f"/><path d="M23 13V17L12 23.500V19Z" fill="#c4950a"/><path d="M4 2Q11 1 13 7.500L15.500 6.500L13.500 12.500L8 9.500L10.500 8.500Q9 4.500 4.500 5Z" fill="#3fbf2f" stroke="#1c7a14" stroke-width=".7"/></svg><div class="b" style="left:1389px;top:573px;width:70px;height:34px;background:#e3e3e3;border:1px solid #c6c6c6;"></div><svg style="left:1402px;top:574px" width="32" height="32" viewBox="0 0 26 26"><path d="M6 6V19A6.500 3 0 0 0 19 19V6Z" fill="#e3c527" stroke="#a8860c" stroke-width=".6"/><ellipse cx="12.500" cy="6" rx="6.500" ry="3" fill="#f6e36a" stroke="#a8860c" stroke-width=".6"/><path d="M8 16Q12 21 17 19L16.500 16.500L22.500 20L17.500 24L17.500 21.700Q11 23 8 16Z" fill="#3fbf2f" stroke="#1c7a14" stroke-width=".7"/></svg><div class="b" style="left:1389px;top:611px;width:70px;height:34px;background:#e3e3e3;border:1px solid #c6c6c6;"></div><svg style="left:1402px;top:612px" width="32" height="32" viewBox="0 0 26 26"><rect x="4.500" y="2.500" width="17" height="20" fill="#f4f4f4" stroke="#c0c0c0"/><path d="M8 7.500L11.500 5L18.500 14.500L15 17Z" fill="#d9b11c" stroke="#6b5a10" stroke-width=".7"/><path d="M15 17L18.500 14.500L19.500 19Z" fill="#e8d9b0" stroke="#444" stroke-width=".5"/></svg>
<!-- sec_bottom -->
<div class="b" style="left:275px;top:729px;width:113px;height:21px;background:#f0f0f0;border:1px solid #d9d9d9;border-top:none;"></div><svg style="left:285px;top:731px" width="16" height="16" viewBox="0 0 16 16"><path d="M1.500 1.500H9.500V4.600H4.800V7H8.200V9.800H4.800V15H1.500Z" fill="#e01b1b" stroke="#8a1010" stroke-width=".5"/><g transform="translate(10.300,10.200)"><path d="M-1.09 -3.54L-0.88 -5.02L0.88 -5.02L1.09 -3.54L1.73 -3.27L2.93 -4.17L4.17 -2.93L3.27 -1.73L3.54 -1.09L5.02 -0.88L5.02 0.88L3.54 1.09L3.27 1.73L4.17 2.93L2.93 4.17L1.73 3.27L1.09 3.54L0.88 5.02L-0.88 5.02L-1.09 3.54L-1.73 3.27L-2.93 4.17L-4.17 2.93L-3.27 1.73L-3.54 1.09L-5.02 0.88L-5.02 -0.88L-3.54 -1.09L-3.27 -1.73L-4.17 -2.93L-2.93 -4.17L-1.73 -3.27Z" fill="#4a7fc0" stroke="#2a55a0" stroke-width=".5"/><circle r="1.500" fill="#fff"/></g></svg><span class="t" style="left:304px;top:733.34px;font-size:12px;color:#000;transform:scaleX(0.9210);">Start page</span><div class="b" style="left:360px;top:733px;width:13px;height:13px;background:#cfcfcf;border:1px solid #a8a8a8;border-radius:2px;"></div><svg style="left:360px;top:733px" width="13" height="13" viewBox="0 0 13 13"><path d="M3.800 3.800L9.200 9.200M9.200 3.800L3.800 9.200" stroke="#fff" stroke-width="1.800"/></svg><div class="b" style="left:387px;top:729px;width:156px;height:21px;background:#f0f0f0;border:1px solid #d9d9d9;border-top:none;"></div><svg style="left:398px;top:731px" width="16" height="16" viewBox="0 0 16 16"><path d="M1.500 1.500H9.500V4.600H4.800V7H8.200V9.800H4.800V15H1.500Z" fill="#e01b1b" stroke="#8a1010" stroke-width=".5"/><g transform="translate(10.300,10.200)"><path d="M-1.09 -3.54L-0.88 -5.02L0.88 -5.02L1.09 -3.54L1.73 -3.27L2.93 -4.17L4.17 -2.93L3.27 -1.73L3.54 -1.09L5.02 -0.88L5.02 0.88L3.54 1.09L3.27 1.73L4.17 2.93L2.93 4.17L1.73 3.27L1.09 3.54L0.88 5.02L-0.88 5.02L-1.09 3.54L-1.73 3.27L-2.93 4.17L-4.17 2.93L-3.27 1.73L-3.54 1.09L-5.02 0.88L-5.02 -0.88L-3.54 -1.09L-3.27 -1.73L-4.17 -2.93L-2.93 -4.17L-1.73 -3.27Z" fill="#4a7fc0" stroke="#2a55a0" stroke-width=".5"/><circle r="1.500" fill="#fff"/></g></svg><span class="t" style="left:418.5px;top:733.34px;font-size:12px;color:#000;transform:scaleX(0.8996);">Doorbell Holder : 1</span><div class="b" style="left:514px;top:733px;width:13px;height:13px;background:#cfcfcf;border:1px solid #a8a8a8;border-radius:2px;"></div><svg style="left:514px;top:733px" width="13" height="13" viewBox="0 0 13 13"><path d="M3.800 3.800L9.200 9.200M9.200 3.800L3.800 9.200" stroke="#fff" stroke-width="1.800"/></svg><div class="b" style="left:542px;top:729px;width:135px;height:21px;background:#f0f0f0;border:1px solid #d9d9d9;border-top:none;"></div><svg style="left:553px;top:731px" width="16" height="16" viewBox="0 0 16 16"><path d="M1.500 1.500H9.500V4.600H4.800V7H8.200V9.800H4.800V15H1.500Z" fill="#e01b1b" stroke="#8a1010" stroke-width=".5"/><g transform="translate(10.300,10.200)"><path d="M-1.09 -3.54L-0.88 -5.02L0.88 -5.02L1.09 -3.54L1.73 -3.27L2.93 -4.17L4.17 -2.93L3.27 -1.73L3.54 -1.09L5.02 -0.88L5.02 0.88L3.54 1.09L3.27 1.73L4.17 2.93L2.93 4.17L1.73 3.27L1.09 3.54L0.88 5.02L-0.88 5.02L-1.09 3.54L-1.73 3.27L-2.93 4.17L-4.17 2.93L-3.27 1.73L-3.54 1.09L-5.02 0.88L-5.02 -0.88L-3.54 -1.09L-3.27 -1.73L-4.17 -2.93L-2.93 -4.17L-1.73 -3.27Z" fill="#4a7fc0" stroke="#2a55a0" stroke-width=".5"/><circle r="1.500" fill="#fff"/></g></svg><span class="t" style="left:572px;top:733.34px;font-size:12px;color:#000;transform:scaleX(0.9244);">Unnamed1 : 1*</span><div class="b" style="left:651px;top:733px;width:13px;height:13px;background:#cfcfcf;border:1px solid #a8a8a8;border-radius:2px;"></div><svg style="left:651px;top:733px" width="13" height="13" viewBox="0 0 13 13"><path d="M3.800 3.800L9.200 9.200M9.200 3.800L3.800 9.200" stroke="#fff" stroke-width="1.800"/></svg><div class="b" style="left:676px;top:728px;width:163px;height:24px;background:#fff;border:1px solid #d9d9d9;border-top:none;"></div><svg style="left:690px;top:732px" width="16" height="16" viewBox="0 0 16 16"><path d="M1.500 1.500H9.500V4.600H4.800V7H8.200V9.800H4.800V15H1.500Z" fill="#e01b1b" stroke="#8a1010" stroke-width=".5"/><g transform="translate(10.300,10.200)"><path d="M-1.09 -3.54L-0.88 -5.02L0.88 -5.02L1.09 -3.54L1.73 -3.27L2.93 -4.17L4.17 -2.93L3.27 -1.73L3.54 -1.09L5.02 -0.88L5.02 0.88L3.54 1.09L3.27 1.73L4.17 2.93L2.93 4.17L1.73 3.27L1.09 3.54L0.88 5.02L-0.88 5.02L-1.09 3.54L-1.73 3.27L-2.93 4.17L-4.17 2.93L-3.27 1.73L-3.54 1.09L-5.02 0.88L-5.02 -0.88L-3.54 -1.09L-3.27 -1.73L-4.17 -2.93L-2.93 -4.17L-1.73 -3.27Z" fill="#4a7fc0" stroke="#2a55a0" stroke-width=".5"/><circle r="1.500" fill="#fff"/></g></svg><span class="t" style="left:710px;top:734.34px;font-size:12px;color:#000;transform:scaleX(0.9284);">tomu_0.4_case : 1*</span><div class="b" style="left:810px;top:733px;width:14px;height:14px;background:#e0784f;border:1px solid #c84a1f;border-radius:2px;"></div><svg style="left:810px;top:733px" width="14" height="14" viewBox="0 0 14 14"><path d="M4 4L10 10M10 4L4 10" stroke="#fff" stroke-width="2"/></svg><div class="b" style="left:1px;top:757px;width:1443px;height:19px;background:#dcdcdc;border-top:1px solid #bdbdbd;border-bottom:1px solid #c2c2c2;"></div><span class="t" style="left:2px;top:760.84px;font-size:12px;color:#000;transform:scaleX(0.8897);">Python console</span><svg style="left:1413px;top:762px" width="10" height="10" viewBox="0 0 10 10"><path d="M3.500 1H9V5.500H3.500ZM1 4H6.500V9H1Z" fill="#dcdcdc" stroke="#000" stroke-width="1.300"/></svg><svg style="left:1430px;top:762px" width="10" height="10" viewBox="0 0 10 10"><path d="M1.500 1.500L8.500 8.500M8.500 1.500L1.500 8.500" stroke="#000" stroke-width="1.500"/></svg><div class="b" style="left:1px;top:778px;width:1443px;height:104px;background:#fff;border:1px solid #82878f;"></div><span class="t" style="left:6px;top:782.08px;font-size:13.333px;font-family:'Liberation Mono',monospace;"><span style="color:#a0a0a0">&gt;&gt;&gt; </span></span><span class="t" style="left:6px;top:798.08px;font-size:13.333px;font-family:'Liberation Mono',monospace;"><span style="color:#a0a0a0">&gt;&gt;&gt; </span><span style="color:#000">ActiveSketch </span><span style="color:#a0a0a0">= </span><span style="color:#000">App</span><span style="color:#a0a0a0">.</span><span style="color:#000">ActiveDocument</span><span style="color:#a0a0a0">.</span><span style="color:#000">getObject</span><span style="color:#a0a0a0">(</span><span style="color:#ff0000">'Sketch009'</span><span style="color:#a0a0a0">)</span></span><span class="t" style="left:6px;top:814.08px;font-size:13.333px;font-family:'Liberation Mono',monospace;"><span style="color:#a0a0a0">&gt;&gt;&gt; </span><span style="color:#0000ff">if </span><span style="color:#000">ActiveSketch</span><span style="color:#a0a0a0">.</span><span style="color:#000">ViewObject</span><span style="color:#a0a0a0">.</span><span style="color:#000">RestoreCamera</span><span style="color:#a0a0a0">:</span></span><span class="t" style="left:6px;top:830.08px;font-size:13.333px;font-family:'Liberation Mono',monospace;"><span style="color:#a0a0a0">&gt;&gt;&gt; </span><span style="color:#000">  ActiveSketch</span><span style="color:#a0a0a0">.</span><span style="color:#000">ViewObject</span><span style="color:#a0a0a0">.</span><span style="color:#000">TempoVis</span><span style="color:#a0a0a0">.</span><span style="color:#000">saveCamera</span><span style="color:#a0a0a0">()</span></span><span class="t" style="left:6px;top:846.08px;font-size:13.333px;font-family:'Liberation Mono',monospace;"><span style="color:#a0a0a0">&gt;&gt;&gt; </span></span><span class="t" style="left:6px;top:862.08px;font-size:13.333px;font-family:'Liberation Mono',monospace;"><span style="color:#a0a0a0">&gt;&gt;&gt; </span></span><div class="b" style="left:1426px;top:779px;width:17px;height:102px;background:#f0f0f0;"></div><div class="b" style="left:1427px;top:845px;width:15px;height:20px;background:#cdcdcd;"></div><svg style="left:1426px;top:779px" width="17" height="102" viewBox="0 0 17 102"><path d="M4.500 11L8.500 7L12.500 11M4.500 91L8.500 95L12.500 91" fill="none" stroke="#505050" stroke-width="1.300"/></svg><span class="t" style="left:7px;top:890.84px;font-size:12px;color:#000;transform:scaleX(0.9692);">Valid, Internal name: Sketch009</span><svg style="left:1240px;top:889px" width="12" height="16" viewBox="0 0 12 16"><rect x="1.500" y="1.500" width="8.500" height="12.500" rx="3.500" fill="none" stroke="#222" stroke-width="1.300"/><path d="M5.800 3.500V7" stroke="#222" stroke-width="1.300"/></svg><span class="t" style="left:1258.5px;top:890.84px;font-size:12px;color:#000;transform:scaleX(0.8881);">CAD</span><svg style="left:1283px;top:894px" width="8" height="6" viewBox="0 0 8 6"><path d="M.3.500H7.700L4 5Z" fill="#000"/></svg><div class="b" style="left:1297px;top:886px;width:1px;height:23px;background:#d7d7d7;"></div><span class="t" style="left:1304.5px;top:890.84px;font-size:12px;color:#000;transform:scaleX(0.9549);">26.24 mm x 13.61 mm</span><div class="b" style="left:1425px;top:886px;width:1px;height:23px;background:#d7d7d7;"></div><svg style="left:1431px;top:898px" width="12" height="12" viewBox="0 0 12 12"><path d="M9 1h2v2H9zM9 5h2v2H9zM5 5h2v2H5zM9 9h2v2H9zM5 9h2v2H5zM1 9h2v2H1z" fill="#bdbdbd"/></svg><div class="b" style="left:0px;top:0px;width:1445px;height:912px;border:1px solid #6fb2f0;pointer-events:none;"></div></div></body></html>
